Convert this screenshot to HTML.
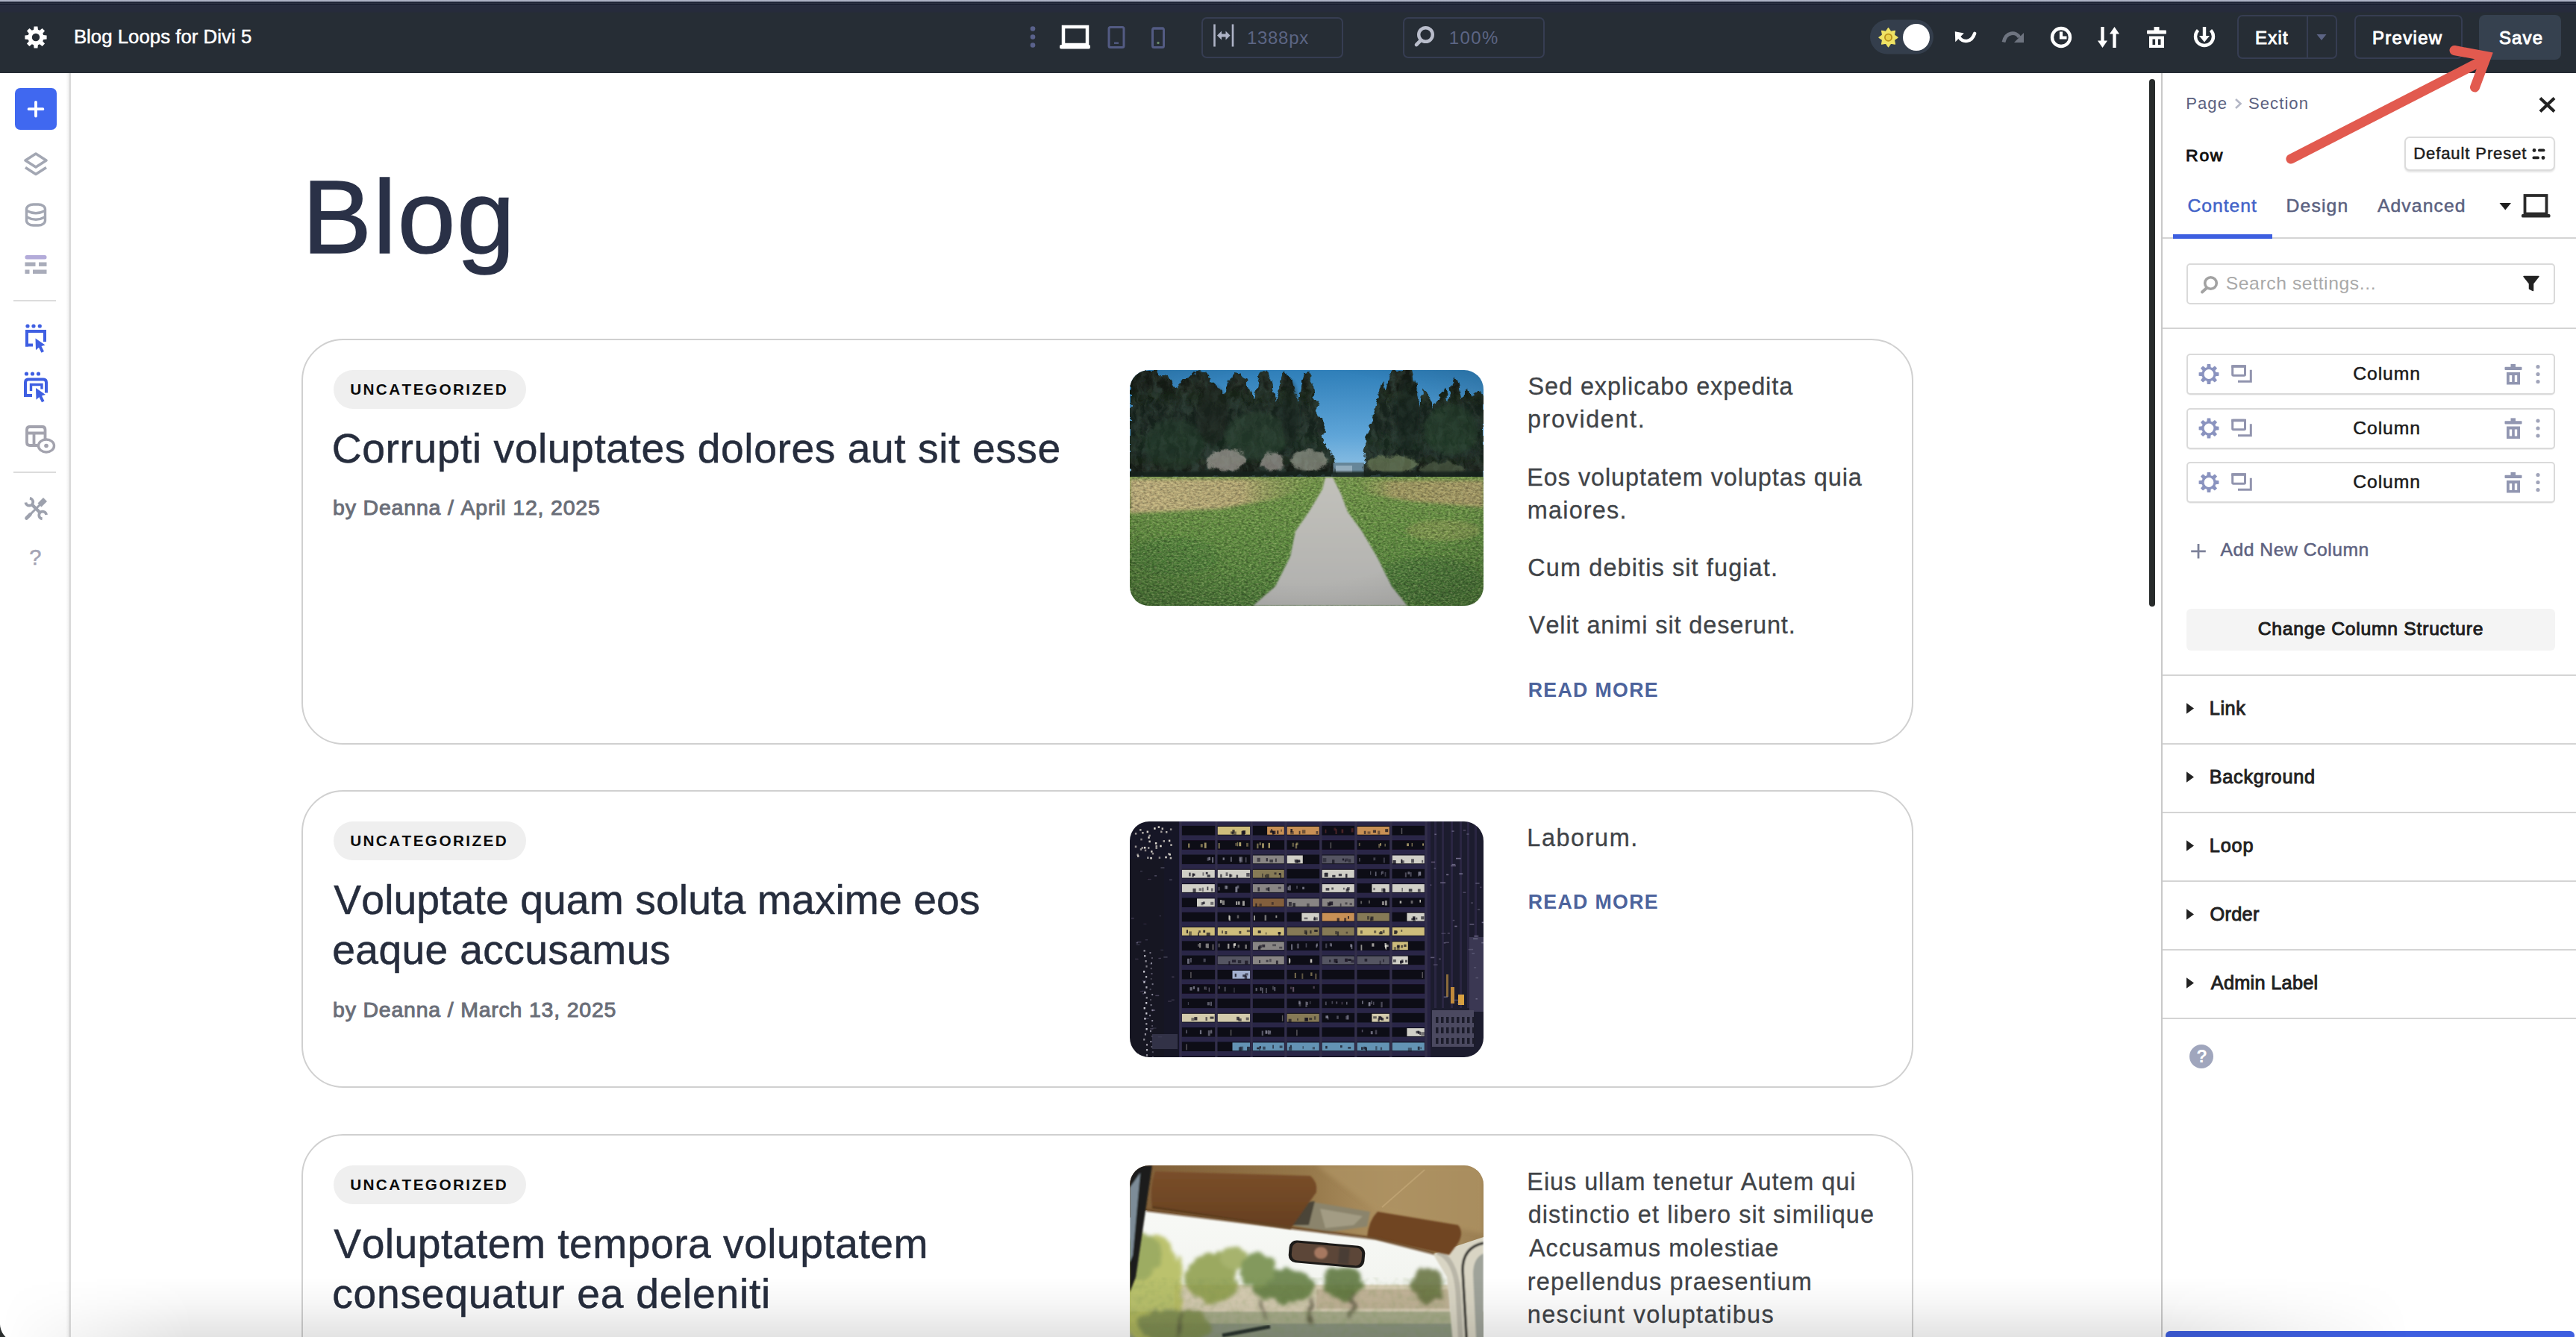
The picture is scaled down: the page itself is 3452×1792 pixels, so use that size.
<!DOCTYPE html><html lang="en"><head><meta charset="utf-8"><title>Blog Loops for Divi 5</title><style>
*{box-sizing:border-box;margin:0;padding:0}
html,body{width:3452px;height:1792px;overflow:hidden;background:#fff}
body{font-family:"Liberation Sans",sans-serif;font-kerning:none;position:relative;-webkit-font-smoothing:antialiased}
.t{position:absolute;line-height:1;white-space:nowrap}
.a{position:absolute}
.m{-webkit-text-stroke:0.5px currentColor}
.m2{-webkit-text-stroke:0.95px currentColor}
.box{position:absolute;border:2px solid #363d52;border-radius:7px}
svg{position:absolute;overflow:visible}
.col{position:absolute;left:2930px;width:494px;height:55px;border:2px solid #dadada;border-radius:5px;background:#fff;box-shadow:0 1px 0 rgba(0,0,0,.06)}
.hl{position:absolute;left:2898px;width:554px;height:2px;background:#d4d4d4}
.card{position:absolute;left:404px;width:2160px;border:2px solid #d0d0d0;border-radius:56px;background:#fff}
.pill{position:absolute;left:447px;width:258px;height:52px;border-radius:26px;background:#efefef}
</style></head><body>
<div class="a" id="canvas" style="left:95px;top:98px;width:2801px;height:1694px;background:#fff"></div>
<div class="t " style="left:405.05px;top:221.76px;font-size:139.53px;letter-spacing:1.822px;color:#2a3147;-webkit-text-stroke:1.5px #2a3147;">Blog</div>
<div class="card" style="top:454px;height:544px"></div>
<div class="pill" style="top:496px"></div>
<div class="t " style="left:469.15px;top:511.70px;font-size:20.78px;letter-spacing:2.369px;color:#0a0a0a;font-weight:700;">UNCATEGORIZED</div>
<div class="t " style="left:444.80px;top:573.73px;font-size:55.23px;letter-spacing:0.561px;color:#262d3d;-webkit-text-stroke:0.5px #262d3d;">Corrupti voluptates dolores aut sit esse</div>
<div class="t " style="left:446.06px;top:666.38px;font-size:28.49px;letter-spacing:0.820px;color:#6a6e78;-webkit-text-stroke:0.95px #6a6e78;">by Deanna / April 12, 2025</div>
<div class="t " style="left:2047.53px;top:501.56px;font-size:32.41px;letter-spacing:0.933px;color:#404347;-webkit-text-stroke:0.3px #404347;">Sed explicabo expedita</div>
<div class="t " style="left:2046.91px;top:546.26px;font-size:32.41px;letter-spacing:1.612px;color:#404347;-webkit-text-stroke:0.3px #404347;">provident.</div>
<div class="t " style="left:2046.34px;top:623.86px;font-size:32.41px;letter-spacing:0.931px;color:#404347;-webkit-text-stroke:0.3px #404347;">Eos voluptatem voluptas quia</div>
<div class="t " style="left:2046.85px;top:667.56px;font-size:32.41px;letter-spacing:1.189px;color:#404347;-webkit-text-stroke:0.3px #404347;">maiores.</div>
<div class="t " style="left:2047.35px;top:745.26px;font-size:32.41px;letter-spacing:1.125px;color:#404347;-webkit-text-stroke:0.3px #404347;">Cum debitis sit fugiat.</div>
<div class="t " style="left:2048.86px;top:821.76px;font-size:32.41px;letter-spacing:0.913px;color:#404347;-webkit-text-stroke:0.3px #404347;">Velit animi sit deserunt.</div>
<div class="t " style="left:2047.71px;top:911.76px;font-size:26.74px;letter-spacing:1.324px;color:#4c639c;font-weight:700;">READ MORE</div>
<div class="card" style="top:1059px;height:399px"></div>
<div class="pill" style="top:1101px"></div>
<div class="t " style="left:469.15px;top:1116.70px;font-size:20.78px;letter-spacing:2.369px;color:#0a0a0a;font-weight:700;">UNCATEGORIZED</div>
<div class="t " style="left:447.36px;top:1178.53px;font-size:55.23px;letter-spacing:0.117px;color:#262d3d;-webkit-text-stroke:0.5px #262d3d;">Voluptate quam soluta maxime eos</div>
<div class="t " style="left:445.25px;top:1245.93px;font-size:55.23px;letter-spacing:0.354px;color:#262d3d;-webkit-text-stroke:0.5px #262d3d;">eaque accusamus</div>
<div class="t " style="left:446.06px;top:1338.88px;font-size:28.49px;letter-spacing:0.797px;color:#6a6e78;-webkit-text-stroke:0.95px #6a6e78;">by Deanna / March 13, 2025</div>
<div class="t " style="left:2046.34px;top:1106.56px;font-size:32.41px;letter-spacing:1.570px;color:#404347;-webkit-text-stroke:0.3px #404347;">Laborum.</div>
<div class="t " style="left:2047.71px;top:1196.36px;font-size:26.74px;letter-spacing:1.324px;color:#4c639c;font-weight:700;">READ MORE</div>
<div class="card" style="top:1520px;height:400px"></div>
<div class="pill" style="top:1562px"></div>
<div class="t " style="left:469.15px;top:1577.70px;font-size:20.78px;letter-spacing:2.369px;color:#0a0a0a;font-weight:700;">UNCATEGORIZED</div>
<div class="t " style="left:447.36px;top:1639.73px;font-size:55.23px;letter-spacing:0.479px;color:#262d3d;-webkit-text-stroke:0.5px #262d3d;">Voluptatem tempora voluptatem</div>
<div class="t " style="left:445.25px;top:1707.13px;font-size:55.23px;letter-spacing:0.728px;color:#262d3d;-webkit-text-stroke:0.5px #262d3d;">consequatur ea deleniti</div>
<div class="t " style="left:2046.34px;top:1567.56px;font-size:32.41px;letter-spacing:0.955px;color:#404347;-webkit-text-stroke:0.3px #404347;">Eius ullam tenetur Autem qui</div>
<div class="t " style="left:2047.64px;top:1612.26px;font-size:32.41px;letter-spacing:1.105px;color:#404347;-webkit-text-stroke:0.3px #404347;">distinctio et libero sit similique</div>
<div class="t " style="left:2048.94px;top:1656.96px;font-size:32.41px;letter-spacing:1.070px;color:#404347;-webkit-text-stroke:0.3px #404347;">Accusamus molestiae</div>
<div class="t " style="left:2046.85px;top:1701.66px;font-size:32.41px;letter-spacing:1.179px;color:#404347;-webkit-text-stroke:0.3px #404347;">repellendus praesentium</div>
<div class="t " style="left:2046.85px;top:1746.36px;font-size:32.41px;letter-spacing:1.360px;color:#404347;-webkit-text-stroke:0.3px #404347;">nesciunt voluptatibus</div>
<svg id="ph1" style="left:1514px;top:496px" width="474" height="316" viewBox="0 0 474 316"><defs><clipPath id="cph1"><rect width="474" height="316" rx="26"/></clipPath>
<linearGradient id="p1sky" x1="0" y1="0" x2="0" y2="1"><stop offset="0" stop-color="#2f7fb9"/><stop offset=".55" stop-color="#5fa5d8"/><stop offset="1" stop-color="#a6cfea"/></linearGradient>
<linearGradient id="p1gr" x1="0" y1="0" x2="0" y2="1"><stop offset="0" stop-color="#74984a"/><stop offset=".45" stop-color="#5f8d40"/><stop offset="1" stop-color="#4b7a38"/></linearGradient>
<linearGradient id="p1tr" x1="0" y1="0" x2="0" y2="1"><stop offset="0" stop-color="#131d17"/><stop offset=".7" stop-color="#18261d"/><stop offset="1" stop-color="#111a14"/></linearGradient>
<linearGradient id="p1pa" x1="0" y1="0" x2="0" y2="1"><stop offset="0" stop-color="#c2c1bb"/><stop offset="1" stop-color="#b0b0ae"/></linearGradient>
<linearGradient id="p1dl" x1="0" y1="0" x2="1" y2="0"><stop offset="0" stop-color="#c6b482"/><stop offset=".6" stop-color="#b8aa76"/><stop offset="1" stop-color="#8f9a58" stop-opacity="0"/></linearGradient>
<linearGradient id="p1dr" x1="1" y1="0" x2="0" y2="0"><stop offset="0" stop-color="#a99d68"/><stop offset=".7" stop-color="#a29a62"/><stop offset="1" stop-color="#8f9a58" stop-opacity="0"/></linearGradient>
<radialGradient id="p1vg" cx=".5" cy=".45" r=".75"><stop offset=".6" stop-color="#000" stop-opacity="0"/><stop offset="1" stop-color="#000" stop-opacity=".16"/></radialGradient>
<filter id="p1n" x="0" y="0" width="100%" height="100%"><feTurbulence type="fractalNoise" baseFrequency=".22 .35" numOctaves="3" seed="7"/><feColorMatrix values="0 0 0 0 0  0 0 0 0 0  0 0 0 0 0  1.6 0 0 0 -.55"/></filter>
<filter id="p1n2" x="0" y="0" width="100%" height="100%"><feTurbulence type="fractalNoise" baseFrequency=".3 .5" numOctaves="2" seed="21"/><feColorMatrix values="0 0 0 0 .85  0 0 0 0 .9  0 0 0 0 .45  0 1.5 0 0 -.62"/></filter>
<filter id="p1d" x="-5%" y="-5%" width="110%" height="110%"><feTurbulence type="fractalNoise" baseFrequency=".09" numOctaves="3" seed="4"/><feDisplacementMap in="SourceGraphic" scale="11" xChannelSelector="R" yChannelSelector="G"/></filter>
<filter id="p1tn" x="0" y="0" width="100%" height="100%"><feTurbulence type="fractalNoise" baseFrequency=".12 .07" numOctaves="3" seed="11"/><feColorMatrix values="0 0 0 0 .30  0 0 0 0 .46  0 0 0 0 .30  0 2.2 0 0 -1.0"/><feComposite in2="SourceGraphic" operator="in"/></filter>
<filter id="p1td" x="0" y="0" width="100%" height="100%"><feTurbulence type="fractalNoise" baseFrequency=".1 .05" numOctaves="3" seed="31"/><feColorMatrix values="0 0 0 0 .03  0 0 0 0 .05  0 0 0 0 .04  2.4 0 0 0 -.9"/><feComposite in2="SourceGraphic" operator="in"/></filter>
<filter id="p1b"><feGaussianBlur stdDeviation="2.2"/></filter>
<filter id="p1b1"><feGaussianBlur stdDeviation="1"/></filter>
</defs><g clip-path="url(#cph1)"><rect width="474" height="160" fill="url(#p1sky)"/><g filter="url(#p1d)"><g fill="url(#p1tr)"><polygon points="0.0,0.0 37.8,0.0 41.4,7.1 50.8,8.3 61.4,24.8 70.9,13.0 80.3,9.5 89.8,0.0 104.0,1.9 111.1,16.5 127.6,31.9 134.7,11.8 141.8,4.7 147.7,3.5 156.0,14.2 165.4,37.8 176.0,5.9 181.9,0.0 189.0,14.2 196.1,43.7 205.6,4.7 209.1,1.9 217.4,11.8 224.5,47.3 233.9,3.5 238.7,1.9 245.7,18.9 248.1,37.8 254.7,47.3 250.5,54.3 258.0,68.5 262.8,82.7 256.4,87.9 265.1,104.0 271.7,115.8 276.9,124.1 276.0,141.8 0.0,144.6"/><polygon points="474.0,144.6 311.4,141.8 312.4,132.3 314.7,113.4 319.5,94.5 316.6,87.9 323.7,70.9 327.5,52.0 331.3,37.8 335.5,26.0 339.3,17.0 342.6,26.5 347.4,14.2 352.1,0.0 378.1,0.0 380.4,14.2 384.2,30.7 388.0,50.8 394.6,23.6 399.3,31.2 406.9,50.8 415.9,33.1 423.0,25.5 428.2,44.9 432.4,14.2 436.2,9.0 440.0,19.4 444.7,40.2 451.3,26.0 458.4,33.6 466.7,30.7 474.0,35.4"/></g></g><g filter="url(#p1d)"><g filter="url(#p1tn)" opacity=".2"><polygon points="0.0,0.0 37.8,0.0 41.4,7.1 50.8,8.3 61.4,24.8 70.9,13.0 80.3,9.5 89.8,0.0 104.0,1.9 111.1,16.5 127.6,31.9 134.7,11.8 141.8,4.7 147.7,3.5 156.0,14.2 165.4,37.8 176.0,5.9 181.9,0.0 189.0,14.2 196.1,43.7 205.6,4.7 209.1,1.9 217.4,11.8 224.5,47.3 233.9,3.5 238.7,1.9 245.7,18.9 248.1,37.8 254.7,47.3 250.5,54.3 258.0,68.5 262.8,82.7 256.4,87.9 265.1,104.0 271.7,115.8 276.9,124.1 276.0,141.8 0.0,144.6"/><polygon points="474.0,144.6 311.4,141.8 312.4,132.3 314.7,113.4 319.5,94.5 316.6,87.9 323.7,70.9 327.5,52.0 331.3,37.8 335.5,26.0 339.3,17.0 342.6,26.5 347.4,14.2 352.1,0.0 378.1,0.0 380.4,14.2 384.2,30.7 388.0,50.8 394.6,23.6 399.3,31.2 406.9,50.8 415.9,33.1 423.0,25.5 428.2,44.9 432.4,14.2 436.2,9.0 440.0,19.4 444.7,40.2 451.3,26.0 458.4,33.6 466.7,30.7 474.0,35.4"/></g></g><g filter="url(#p1d)"><g filter="url(#p1td)" opacity=".9"><polygon points="0.0,0.0 37.8,0.0 41.4,7.1 50.8,8.3 61.4,24.8 70.9,13.0 80.3,9.5 89.8,0.0 104.0,1.9 111.1,16.5 127.6,31.9 134.7,11.8 141.8,4.7 147.7,3.5 156.0,14.2 165.4,37.8 176.0,5.9 181.9,0.0 189.0,14.2 196.1,43.7 205.6,4.7 209.1,1.9 217.4,11.8 224.5,47.3 233.9,3.5 238.7,1.9 245.7,18.9 248.1,37.8 254.7,47.3 250.5,54.3 258.0,68.5 262.8,82.7 256.4,87.9 265.1,104.0 271.7,115.8 276.9,124.1 276.0,141.8 0.0,144.6"/><polygon points="474.0,144.6 311.4,141.8 312.4,132.3 314.7,113.4 319.5,94.5 316.6,87.9 323.7,70.9 327.5,52.0 331.3,37.8 335.5,26.0 339.3,17.0 342.6,26.5 347.4,14.2 352.1,0.0 378.1,0.0 380.4,14.2 384.2,30.7 388.0,50.8 394.6,23.6 399.3,31.2 406.9,50.8 415.9,33.1 423.0,25.5 428.2,44.9 432.4,14.2 436.2,9.0 440.0,19.4 444.7,40.2 451.3,26.0 458.4,33.6 466.7,30.7 474.0,35.4"/></g></g><rect x="272" y="124" width="42" height="20" fill="#5c7480" opacity=".75"/><rect x="276" y="128" width="22" height="10" fill="#9fb6c6" opacity=".8"/><g filter="url(#p1b)" opacity=".45"><ellipse cx="170" cy="88" rx="42" ry="32" fill="#2e4a34"/><ellipse cx="60" cy="100" rx="40" ry="34" fill="#27402e"/><ellipse cx="430" cy="80" rx="36" ry="34" fill="#2c4830"/><ellipse cx="372" cy="60" rx="16" ry="50" fill="#16201a"/><ellipse cx="110" cy="60" rx="22" ry="40" fill="#1a241e"/><ellipse cx="215" cy="60" rx="12" ry="46" fill="#17221b"/></g><g filter="url(#p1d)" opacity=".58"><g filter="url(#p1b1)"><ellipse cx="130" cy="121" rx="27" ry="14" fill="#c3bbb4"/><ellipse cx="192" cy="123" rx="16" ry="12" fill="#b9b0ac"/><ellipse cx="240" cy="121" rx="25" ry="14" fill="#aeb0a2"/><ellipse cx="350" cy="126" rx="34" ry="12" fill="#7f9068"/><ellipse cx="418" cy="132" rx="30" ry="8" fill="#5a6a50"/></g></g><rect x="0" y="136" width="474" height="12" fill="#16221a" filter="url(#p1b1)" opacity=".85"/><rect x="0" y="143" width="474" height="173" fill="url(#p1gr)"/><g filter="url(#p1b)"><polygon points="0,146 250,146 236,158 200,172 120,186 0,192" fill="url(#p1dl)"/><polygon points="474,148 300,148 320,166 380,176 474,184" fill="url(#p1dr)"/><ellipse cx="420" cy="215" rx="50" ry="14" fill="#8f9a58" opacity=".55"/><ellipse cx="60" cy="250" rx="60" ry="26" fill="#47783a" opacity=".4"/><ellipse cx="400" cy="280" rx="70" ry="30" fill="#3e6e34" opacity=".45"/></g><rect x="0" y="143" width="474" height="173" filter="url(#p1n)" opacity=".42"/><rect x="0" y="143" width="474" height="173" filter="url(#p1n2)" opacity=".5"/><polygon points="262,144 272,144 283,166 292,190 311,216 331,250 351,290 372,316 165,316 195,290 215,250 222,216 240,190 258,160" fill="url(#p1pa)" filter="url(#p1b1)"/><rect width="474" height="316" fill="url(#p1vg)"/></g></svg>
<svg id="ph2" style="left:1514px;top:1101px" width="474" height="316" viewBox="0 0 474 316"><defs><clipPath id="cph2"><rect width="474" height="316" rx="26"/></clipPath><filter id="p2b"><feGaussianBlur stdDeviation=".5"/></filter></defs><g clip-path="url(#cph2)"><g filter="url(#p2b)"><rect width="474" height="316" fill="#15131f"/><rect x="399" y="0" width="75" height="316" fill="#1d1a2e"/><rect x="408" y="0" width="3" height="250" fill="#2a2642"/><rect x="418" y="0" width="3" height="250" fill="#2a2642"/><rect x="430" y="0" width="3" height="250" fill="#2a2642"/><rect x="442" y="0" width="3" height="250" fill="#2a2642"/><rect x="452" y="0" width="3" height="250" fill="#2a2642"/><rect x="462" y="0" width="3" height="250" fill="#2a2642"/><rect x="455" y="155" width="19" height="100" fill="#3a3852"/><rect x="405" y="253" width="56" height="49" fill="#4b4961"/><rect x="410" y="262" width="3.5" height="8" fill="#1c1a2a"/><rect x="417" y="262" width="3.5" height="8" fill="#1c1a2a"/><rect x="424" y="262" width="3.5" height="8" fill="#1c1a2a"/><rect x="431" y="262" width="3.5" height="8" fill="#1c1a2a"/><rect x="438" y="262" width="3.5" height="8" fill="#1c1a2a"/><rect x="445" y="262" width="3.5" height="8" fill="#1c1a2a"/><rect x="452" y="262" width="3.5" height="8" fill="#1c1a2a"/><rect x="459" y="262" width="3.5" height="8" fill="#1c1a2a"/><rect x="410" y="276" width="3.5" height="8" fill="#1c1a2a"/><rect x="417" y="276" width="3.5" height="8" fill="#1c1a2a"/><rect x="424" y="276" width="3.5" height="8" fill="#1c1a2a"/><rect x="431" y="276" width="3.5" height="8" fill="#1c1a2a"/><rect x="438" y="276" width="3.5" height="8" fill="#1c1a2a"/><rect x="445" y="276" width="3.5" height="8" fill="#1c1a2a"/><rect x="452" y="276" width="3.5" height="8" fill="#1c1a2a"/><rect x="459" y="276" width="3.5" height="8" fill="#1c1a2a"/><rect x="410" y="290" width="3.5" height="8" fill="#1c1a2a"/><rect x="417" y="290" width="3.5" height="8" fill="#1c1a2a"/><rect x="424" y="290" width="3.5" height="8" fill="#1c1a2a"/><rect x="431" y="290" width="3.5" height="8" fill="#1c1a2a"/><rect x="438" y="290" width="3.5" height="8" fill="#1c1a2a"/><rect x="445" y="290" width="3.5" height="8" fill="#1c1a2a"/><rect x="452" y="290" width="3.5" height="8" fill="#1c1a2a"/><rect x="459" y="290" width="3.5" height="8" fill="#1c1a2a"/><rect x="430" y="222" width="5" height="22" fill="#c08a3a"/><rect x="440" y="232" width="8" height="14" fill="#d8a040"/><rect x="424" y="205" width="3" height="30" fill="#8a6a3a"/><rect x="446.8" y="11.1" width="3.4" height="1.6" fill="#8c88a8" opacity="0.41"/><rect x="453.6" y="170.8" width="6.5" height="1.6" fill="#8c88a8" opacity="0.34"/><rect x="431.5" y="12.3" width="3.1" height="1.6" fill="#8c88a8" opacity="0.55"/><rect x="403.9" y="53.7" width="5.2" height="1.6" fill="#8c88a8" opacity="0.57"/><rect x="417.4" y="149.4" width="6.0" height="1.6" fill="#8c88a8" opacity="0.30"/><rect x="458.4" y="176.0" width="3.7" height="1.6" fill="#8c88a8" opacity="0.38"/><rect x="469.0" y="87.5" width="2.5" height="1.6" fill="#8c88a8" opacity="0.35"/><rect x="461.3" y="152.9" width="6.0" height="1.6" fill="#8c88a8" opacity="0.66"/><rect x="439.5" y="243.4" width="3.9" height="1.6" fill="#8c88a8" opacity="0.58"/><rect x="460.1" y="156.5" width="6.3" height="1.6" fill="#8c88a8" opacity="0.59"/><rect x="451.3" y="16.2" width="3.1" height="1.6" fill="#8c88a8" opacity="0.44"/><rect x="407.6" y="62.0" width="2.5" height="1.6" fill="#8c88a8" opacity="0.44"/><rect x="446.5" y="94.4" width="3.9" height="1.6" fill="#8c88a8" opacity="0.40"/><rect x="420.7" y="234.5" width="5.2" height="1.6" fill="#8c88a8" opacity="0.60"/><rect x="414.0" y="183.6" width="2.8" height="1.6" fill="#8c88a8" opacity="0.49"/><rect x="471.3" y="161.8" width="4.8" height="1.6" fill="#8c88a8" opacity="0.64"/><rect x="461.0" y="195.1" width="3.1" height="1.6" fill="#8c88a8" opacity="0.32"/><rect x="424.1" y="70.6" width="3.1" height="1.6" fill="#8c88a8" opacity="0.77"/><rect x="463.3" y="82.1" width="5.3" height="1.6" fill="#8c88a8" opacity="0.50"/><rect x="466.0" y="117.4" width="3.3" height="1.6" fill="#8c88a8" opacity="0.42"/><rect x="441.3" y="69.4" width="4.9" height="1.6" fill="#8c88a8" opacity="0.75"/><rect x="430.0" y="58.7" width="7.0" height="1.6" fill="#8c88a8" opacity="0.55"/><rect x="408.4" y="16.5" width="2.5" height="1.6" fill="#8c88a8" opacity="0.61"/><rect x="457.4" y="108.4" width="2.3" height="1.6" fill="#8c88a8" opacity="0.49"/><rect x="471.7" y="134.6" width="6.9" height="1.6" fill="#8c88a8" opacity="0.73"/><rect x="402.8" y="181.6" width="5.4" height="1.6" fill="#8c88a8" opacity="0.57"/><rect x="420.7" y="162.0" width="2.6" height="1.6" fill="#8c88a8" opacity="0.52"/><rect x="433.8" y="238.7" width="6.4" height="1.6" fill="#8c88a8" opacity="0.43"/><rect x="437.0" y="48.8" width="6.6" height="1.6" fill="#8c88a8" opacity="0.74"/><rect x="422.9" y="161.5" width="5.0" height="1.6" fill="#8c88a8" opacity="0.38"/><rect x="455.4" y="137.1" width="5.9" height="1.6" fill="#8c88a8" opacity="0.57"/><rect x="402.0" y="84.4" width="2.1" height="1.6" fill="#8c88a8" opacity="0.76"/><rect x="463.5" y="208.8" width="3.5" height="1.6" fill="#8c88a8" opacity="0.33"/><rect x="463.5" y="237.0" width="2.4" height="1.6" fill="#8c88a8" opacity="0.54"/><rect x="406.8" y="191.3" width="5.8" height="1.6" fill="#8c88a8" opacity="0.36"/><rect x="435.3" y="139.7" width="3.3" height="1.6" fill="#8c88a8" opacity="0.74"/><rect x="431.6" y="56.9" width="4.7" height="1.6" fill="#8c88a8" opacity="0.66"/><rect x="416.1" y="81.4" width="7.0" height="1.6" fill="#8c88a8" opacity="0.62"/><rect x="432.7" y="131.8" width="2.6" height="1.6" fill="#8c88a8" opacity="0.41"/><rect x="425.7" y="149.1" width="3.2" height="1.6" fill="#8c88a8" opacity="0.41"/><rect x="0" y="0" width="67" height="316" fill="#191727"/><rect x="0" y="50" width="46" height="266" fill="#141220"/><rect x="6.8" y="32.5" width="2.4" height="2.6" fill="#e8e4d8" opacity="0.61"/><rect x="51.0" y="42.1" width="2.4" height="2.6" fill="#e8e4d8" opacity="0.54"/><rect x="15.6" y="34.1" width="2.4" height="2.6" fill="#e8e4d8" opacity="0.61"/><rect x="10.0" y="45.3" width="2.4" height="2.6" fill="#e8e4d8" opacity="0.79"/><rect x="28.1" y="39.0" width="2.4" height="2.6" fill="#e8e4d8" opacity="0.90"/><rect x="13.1" y="10.1" width="2.4" height="2.6" fill="#e8e4d8" opacity="0.72"/><rect x="25.4" y="25.6" width="2.4" height="2.6" fill="#e8e4d8" opacity="0.86"/><rect x="38.7" y="47.3" width="2.4" height="2.6" fill="#e8e4d8" opacity="0.55"/><rect x="24.3" y="20.3" width="2.4" height="2.6" fill="#e8e4d8" opacity="0.93"/><rect x="16.2" y="14.0" width="2.4" height="2.6" fill="#e8e4d8" opacity="0.72"/><rect x="25.4" y="17.7" width="2.4" height="2.6" fill="#e8e4d8" opacity="0.62"/><rect x="51.9" y="24.6" width="2.4" height="2.6" fill="#e8e4d8" opacity="0.93"/><rect x="32.2" y="8.1" width="2.4" height="2.6" fill="#e8e4d8" opacity="1.00"/><rect x="47.3" y="46.7" width="2.4" height="2.6" fill="#e8e4d8" opacity="0.96"/><rect x="48.0" y="13.0" width="2.4" height="2.6" fill="#e8e4d8" opacity="0.74"/><rect x="14.3" y="22.8" width="2.4" height="2.6" fill="#e8e4d8" opacity="0.53"/><rect x="23.1" y="47.4" width="2.4" height="2.6" fill="#e8e4d8" opacity="0.63"/><rect x="44.6" y="25.1" width="2.4" height="2.6" fill="#e8e4d8" opacity="0.71"/><rect x="53.7" y="47.8" width="2.4" height="2.6" fill="#e8e4d8" opacity="0.78"/><rect x="41.1" y="12.5" width="2.4" height="2.6" fill="#e8e4d8" opacity="0.65"/><rect x="54.3" y="30.3" width="2.4" height="2.6" fill="#e8e4d8" opacity="0.77"/><rect x="42.6" y="8.4" width="2.4" height="2.6" fill="#e8e4d8" opacity="0.79"/><rect x="29.7" y="41.8" width="2.4" height="2.6" fill="#e8e4d8" opacity="0.58"/><rect x="53.9" y="9.4" width="2.4" height="2.6" fill="#e8e4d8" opacity="0.59"/><rect x="34.5" y="34.4" width="2.4" height="2.6" fill="#e8e4d8" opacity="0.62"/><rect x="9.4" y="43.4" width="2.4" height="2.6" fill="#e8e4d8" opacity="0.62"/><rect x="34.5" y="32.0" width="2.4" height="2.6" fill="#e8e4d8" opacity="0.71"/><rect x="33.9" y="28.0" width="2.4" height="2.6" fill="#e8e4d8" opacity="0.97"/><rect x="13.8" y="36.1" width="2.4" height="2.6" fill="#e8e4d8" opacity="0.62"/><rect x="24.0" y="34.2" width="2.4" height="2.6" fill="#e8e4d8" opacity="0.65"/><rect x="19.8" y="37.6" width="2.4" height="2.6" fill="#e8e4d8" opacity="0.54"/><rect x="27.3" y="47.9" width="2.4" height="2.6" fill="#e8e4d8" opacity="1.00"/><rect x="6.9" y="15.0" width="2.4" height="2.6" fill="#e8e4d8" opacity="0.63"/><rect x="52.5" y="43.0" width="2.4" height="2.6" fill="#e8e4d8" opacity="0.94"/><rect x="22.6" y="12.6" width="2.4" height="2.6" fill="#e8e4d8" opacity="0.92"/><rect x="40.3" y="31.7" width="2.4" height="2.6" fill="#e8e4d8" opacity="0.99"/><rect x="37.7" y="6.3" width="2.4" height="2.6" fill="#e8e4d8" opacity="0.91"/><rect x="18.9" y="33.9" width="2.4" height="2.6" fill="#e8e4d8" opacity="0.97"/><rect x="18.5" y="172" width="2.2" height="2.6" fill="#d8d8e0" opacity="0.56"/><rect x="26.4" y="175" width="2" height="2.2" fill="#b8b8c8" opacity="0.58"/><rect x="19.1" y="179" width="2.2" height="2.6" fill="#d8d8e0" opacity="0.80"/><rect x="28.9" y="182" width="2" height="2.2" fill="#b8b8c8" opacity="0.40"/><rect x="20.5" y="186" width="2.2" height="2.6" fill="#d8d8e0" opacity="0.63"/><rect x="28.0" y="189" width="2" height="2.2" fill="#b8b8c8" opacity="0.75"/><rect x="21.4" y="193" width="2.2" height="2.6" fill="#d8d8e0" opacity="0.55"/><rect x="27.7" y="196" width="2" height="2.2" fill="#b8b8c8" opacity="0.44"/><rect x="18.0" y="200" width="2.2" height="2.6" fill="#d8d8e0" opacity="0.89"/><rect x="28.5" y="203" width="2" height="2.2" fill="#b8b8c8" opacity="0.43"/><rect x="21.0" y="207" width="2.2" height="2.6" fill="#d8d8e0" opacity="0.78"/><rect x="27.7" y="210" width="2" height="2.2" fill="#b8b8c8" opacity="0.30"/><rect x="18.3" y="214" width="2.2" height="2.6" fill="#d8d8e0" opacity="0.94"/><rect x="29.6" y="217" width="2" height="2.2" fill="#b8b8c8" opacity="0.57"/><rect x="21.3" y="221" width="2.2" height="2.6" fill="#d8d8e0" opacity="0.79"/><rect x="26.6" y="224" width="2" height="2.2" fill="#b8b8c8" opacity="0.36"/><rect x="19.2" y="228" width="2.2" height="2.6" fill="#d8d8e0" opacity="0.95"/><rect x="29.2" y="231" width="2" height="2.2" fill="#b8b8c8" opacity="0.73"/><rect x="21.6" y="235" width="2.2" height="2.6" fill="#d8d8e0" opacity="0.61"/><rect x="27.0" y="238" width="2" height="2.2" fill="#b8b8c8" opacity="0.35"/><rect x="21.1" y="242" width="2.2" height="2.6" fill="#d8d8e0" opacity="0.94"/><rect x="27.6" y="245" width="2" height="2.2" fill="#b8b8c8" opacity="0.61"/><rect x="18.6" y="249" width="2.2" height="2.6" fill="#d8d8e0" opacity="0.96"/><rect x="29.5" y="252" width="2" height="2.2" fill="#b8b8c8" opacity="0.79"/><rect x="21.2" y="256" width="2.2" height="2.6" fill="#d8d8e0" opacity="0.94"/><rect x="26.1" y="259" width="2" height="2.2" fill="#b8b8c8" opacity="0.67"/><rect x="19.3" y="263" width="2.2" height="2.6" fill="#d8d8e0" opacity="0.97"/><rect x="29.2" y="266" width="2" height="2.2" fill="#b8b8c8" opacity="0.73"/><rect x="21.2" y="270" width="2.2" height="2.6" fill="#d8d8e0" opacity="0.63"/><rect x="29.1" y="273" width="2" height="2.2" fill="#b8b8c8" opacity="0.35"/><rect x="21.5" y="277" width="2.2" height="2.6" fill="#d8d8e0" opacity="0.93"/><rect x="26.9" y="280" width="2" height="2.2" fill="#b8b8c8" opacity="0.71"/><rect x="19.8" y="284" width="2.2" height="2.6" fill="#d8d8e0" opacity="0.65"/><rect x="29.2" y="287" width="2" height="2.2" fill="#b8b8c8" opacity="0.41"/><rect x="18.1" y="291" width="2.2" height="2.6" fill="#d8d8e0" opacity="0.60"/><rect x="27.3" y="294" width="2" height="2.2" fill="#b8b8c8" opacity="0.73"/><rect x="21.9" y="298" width="2.2" height="2.6" fill="#d8d8e0" opacity="0.64"/><rect x="28.6" y="301" width="2" height="2.2" fill="#b8b8c8" opacity="0.50"/><rect x="21.9" y="305" width="2.2" height="2.6" fill="#d8d8e0" opacity="0.77"/><rect x="29.8" y="308" width="2" height="2.2" fill="#b8b8c8" opacity="0.36"/><rect x="21.9" y="312" width="2.2" height="2.6" fill="#d8d8e0" opacity="0.59"/><rect x="29.9" y="315" width="2" height="2.2" fill="#b8b8c8" opacity="0.43"/><rect x="8.5" y="164.3" width="4.9" height="1.5" fill="#7f7c98" opacity="0.33"/><rect x="38.4" y="182.7" width="3.5" height="1.5" fill="#7f7c98" opacity="0.43"/><rect x="17.3" y="230.1" width="2.0" height="1.5" fill="#7f7c98" opacity="0.57"/><rect x="34.3" y="232.7" width="5.0" height="1.5" fill="#7f7c98" opacity="0.47"/><rect x="23.9" y="76.8" width="4.7" height="1.5" fill="#7f7c98" opacity="0.33"/><rect x="20.8" y="263.5" width="4.9" height="1.5" fill="#7f7c98" opacity="0.32"/><rect x="20.6" y="158.0" width="3.6" height="1.5" fill="#7f7c98" opacity="0.32"/><rect x="9.6" y="160.9" width="5.8" height="1.5" fill="#7f7c98" opacity="0.47"/><rect x="56.2" y="207.7" width="3.2" height="1.5" fill="#7f7c98" opacity="0.42"/><rect x="2.0" y="128.9" width="3.7" height="1.5" fill="#7f7c98" opacity="0.43"/><rect x="41.3" y="171.6" width="3.8" height="1.5" fill="#7f7c98" opacity="0.29"/><rect x="30.4" y="276.3" width="5.2" height="1.5" fill="#7f7c98" opacity="0.27"/><rect x="7.1" y="183.7" width="4.5" height="1.5" fill="#7f7c98" opacity="0.33"/><rect x="51.1" y="240.3" width="4.7" height="1.5" fill="#7f7c98" opacity="0.29"/><rect x="13.9" y="65.9" width="3.0" height="1.5" fill="#7f7c98" opacity="0.39"/><rect x="53.0" y="77.5" width="3.7" height="1.5" fill="#7f7c98" opacity="0.45"/><rect x="13.7" y="227.1" width="4.0" height="1.5" fill="#7f7c98" opacity="0.30"/><rect x="41.4" y="61.3" width="5.0" height="1.5" fill="#7f7c98" opacity="0.51"/><rect x="8.4" y="162.0" width="2.7" height="1.5" fill="#7f7c98" opacity="0.58"/><rect x="33.1" y="72.1" width="3.0" height="1.5" fill="#7f7c98" opacity="0.54"/><rect x="29.4" y="252.3" width="4.7" height="1.5" fill="#7f7c98" opacity="0.60"/><rect x="37.7" y="288.0" width="5.6" height="1.5" fill="#7f7c98" opacity="0.45"/><rect x="45.2" y="181.1" width="5.3" height="1.5" fill="#7f7c98" opacity="0.42"/><rect x="55.8" y="238.5" width="3.9" height="1.5" fill="#7f7c98" opacity="0.30"/><rect x="16.8" y="213.0" width="5.1" height="1.5" fill="#7f7c98" opacity="0.41"/><rect x="39.6" y="125.9" width="2.3" height="1.5" fill="#7f7c98" opacity="0.31"/><rect x="18.3" y="136.7" width="4.2" height="1.5" fill="#7f7c98" opacity="0.26"/><rect x="15.9" y="226.5" width="4.8" height="1.5" fill="#7f7c98" opacity="0.23"/><rect x="26.5" y="190.2" width="3.7" height="1.5" fill="#7f7c98" opacity="0.28"/><rect x="27.2" y="277.2" width="4.3" height="1.5" fill="#7f7c98" opacity="0.48"/><rect x="30" y="285" width="34" height="20" fill="#3a3850" opacity=".8"/><rect x="66" y="0" width="334" height="316" fill="#2c2846"/><rect x="69.5" y="5.9" width="44.7" height="12.6" fill="#0e0d18"/><rect x="117.2" y="5.9" width="44.3" height="12.6" fill="#0e0d18"/><rect x="117.6" y="6.9" width="43.5" height="10.8" fill="#e9d68a" opacity="0.88"/><rect x="136.9" y="13.7" width="2.5" height="3.7" fill="#15131f" opacity="0.81"/><rect x="151.0" y="12.1" width="4.1" height="4.9" fill="#15131f" opacity="0.81"/><rect x="137.4" y="11.0" width="3.2" height="3.7" fill="#15131f" opacity="0.72"/><rect x="149.6" y="12.8" width="4.4" height="5.3" fill="#15131f" opacity="0.84"/><rect x="139.2" y="13.5" width="3.6" height="4.5" fill="#15131f" opacity="0.48"/><rect x="135.0" y="13.4" width="2.1" height="3.3" fill="#15131f" opacity="0.58"/><rect x="164.5" y="5.9" width="42.7" height="12.6" fill="#0e0d18"/><rect x="184.1" y="6.9" width="22.7" height="10.8" fill="#e2a35c" opacity="0.88"/><rect x="190.8" y="12.9" width="2.8" height="4.8" fill="#15131f" opacity="0.78"/><rect x="189.4" y="10.2" width="1.6" height="4.1" fill="#15131f" opacity="0.85"/><rect x="191.2" y="12.5" width="4.2" height="4.5" fill="#15131f" opacity="0.75"/><rect x="202.3" y="10.7" width="1.6" height="3.0" fill="#15131f" opacity="0.50"/><rect x="197.1" y="12.2" width="2.3" height="4.6" fill="#15131f" opacity="0.76"/><rect x="187.8" y="12.3" width="4.1" height="2.8" fill="#15131f" opacity="0.78"/><rect x="210.2" y="5.9" width="44.0" height="12.6" fill="#0e0d18"/><rect x="210.6" y="6.9" width="43.2" height="10.8" fill="#e2a35c" opacity="0.88"/><rect x="215.4" y="10.0" width="2.6" height="4.5" fill="#15131f" opacity="0.83"/><rect x="226.7" y="12.8" width="1.8" height="4.6" fill="#15131f" opacity="0.70"/><rect x="215.2" y="13.0" width="4.5" height="4.3" fill="#15131f" opacity="0.50"/><rect x="249.6" y="13.0" width="2.7" height="3.8" fill="#15131f" opacity="0.60"/><rect x="230.9" y="11.3" width="4.5" height="5.0" fill="#15131f" opacity="0.49"/><rect x="257.2" y="5.9" width="44.0" height="12.6" fill="#0e0d18"/><rect x="283.6" y="10.5" width="2.6" height="5.0" fill="#6a3030" opacity="0.68"/><rect x="296.8" y="9.1" width="2.8" height="5.4" fill="#6a3030" opacity="0.57"/><rect x="275.6" y="10.2" width="1.7" height="6.8" fill="#6a3030" opacity="0.72"/><rect x="261.7" y="10.6" width="1.7" height="5.1" fill="#6a3030" opacity="0.62"/><rect x="273.4" y="8.5" width="2.9" height="3.8" fill="#6a3030" opacity="0.45"/><rect x="304.2" y="5.9" width="44.0" height="12.6" fill="#0e0d18"/><rect x="304.6" y="6.9" width="43.2" height="10.8" fill="#e2a35c" opacity="0.88"/><rect x="318.5" y="13.4" width="4.0" height="3.3" fill="#15131f" opacity="0.45"/><rect x="342.2" y="10.2" width="4.0" height="4.0" fill="#15131f" opacity="0.75"/><rect x="332.1" y="12.5" width="3.2" height="4.9" fill="#15131f" opacity="0.49"/><rect x="313.8" y="12.7" width="2.6" height="4.2" fill="#15131f" opacity="0.64"/><rect x="325.9" y="11.6" width="4.1" height="3.5" fill="#15131f" opacity="0.73"/><rect x="351.2" y="5.9" width="44.0" height="12.6" fill="#0e0d18"/><rect x="363.8" y="8.9" width="1.4" height="8" fill="#eceadf" opacity=".35"/><rect x="69.5" y="25.2" width="44.7" height="12.6" fill="#0e0d18"/><rect x="99.9" y="28.5" width="2.7" height="7.3" fill="#e9d68a" opacity="0.66"/><rect x="78.3" y="29.5" width="1.8" height="5.7" fill="#e9d68a" opacity="0.69"/><rect x="94.8" y="30.2" width="2.9" height="4.3" fill="#e9d68a" opacity="0.51"/><rect x="117.2" y="25.2" width="44.3" height="12.6" fill="#0e0d18"/><rect x="118.8" y="29.0" width="1.7" height="7.4" fill="#e9d68a" opacity="0.60"/><rect x="146.3" y="28.0" width="2.9" height="5.2" fill="#e9d68a" opacity="0.74"/><rect x="141.3" y="28.9" width="2.1" height="3.8" fill="#e9d68a" opacity="0.37"/><rect x="156.1" y="28.9" width="2.8" height="4.8" fill="#e9d68a" opacity="0.38"/><rect x="143.6" y="27.8" width="1.5" height="5.5" fill="#e9d68a" opacity="0.49"/><rect x="164.5" y="25.2" width="42.7" height="12.6" fill="#0e0d18"/><rect x="170.1" y="29.6" width="2.4" height="6.6" fill="#e9d68a" opacity="0.45"/><rect x="185.7" y="28.8" width="2.1" height="6.9" fill="#e9d68a" opacity="0.80"/><rect x="177.3" y="29.3" width="2.4" height="6.3" fill="#e9d68a" opacity="0.78"/><rect x="173.5" y="28.2" width="2.5" height="3.7" fill="#e9d68a" opacity="0.43"/><rect x="210.2" y="25.2" width="44.0" height="12.6" fill="#0e0d18"/><rect x="217.5" y="28.7" width="2.6" height="5.1" fill="#e9d68a" opacity="0.36"/><rect x="222.7" y="28.4" width="2.9" height="3.3" fill="#e9d68a" opacity="0.46"/><rect x="221.8" y="29.7" width="2.4" height="6.6" fill="#e9d68a" opacity="0.44"/><rect x="257.2" y="25.2" width="44.0" height="12.6" fill="#0e0d18"/><rect x="268.7" y="28.2" width="1.4" height="8" fill="#eceadf" opacity=".35"/><rect x="304.2" y="25.2" width="44.0" height="12.6" fill="#0e0d18"/><rect x="341.5" y="29.8" width="1.3" height="3.7" fill="#e9d68a" opacity="0.49"/><rect x="335.2" y="29.1" width="1.8" height="3.6" fill="#e9d68a" opacity="0.66"/><rect x="333.2" y="30.1" width="2.2" height="5.2" fill="#e9d68a" opacity="0.39"/><rect x="306.8" y="28.8" width="1.8" height="4.1" fill="#e9d68a" opacity="0.39"/><rect x="351.2" y="25.2" width="44.0" height="12.6" fill="#0e0d18"/><rect x="392.2" y="29.4" width="1.7" height="3.2" fill="#e9d68a" opacity="0.69"/><rect x="371.0" y="29.3" width="3.0" height="3.8" fill="#e9d68a" opacity="0.61"/><rect x="377.6" y="28.9" width="1.4" height="4.6" fill="#e9d68a" opacity="0.50"/><rect x="69.5" y="44.5" width="44.7" height="12.6" fill="#0e0d18"/><rect x="105.4" y="47.8" width="2.6" height="4.3" fill="#8f8fa0" opacity="0.78"/><rect x="103.6" y="48.4" width="2.1" height="4.4" fill="#8f8fa0" opacity="0.50"/><rect x="110.0" y="48.0" width="2.2" height="7.4" fill="#8f8fa0" opacity="0.65"/><rect x="117.2" y="44.5" width="44.3" height="12.6" fill="#0e0d18"/><rect x="134.9" y="47.5" width="1.9" height="6.4" fill="#8f8fa0" opacity="0.63"/><rect x="148.8" y="47.5" width="2.3" height="7.2" fill="#8f8fa0" opacity="0.55"/><rect x="146.3" y="47.3" width="3.1" height="5.7" fill="#8f8fa0" opacity="0.46"/><rect x="124.6" y="48.4" width="2.3" height="3.4" fill="#8f8fa0" opacity="0.80"/><rect x="155.0" y="48.2" width="1.4" height="6.7" fill="#8f8fa0" opacity="0.57"/><rect x="147.1" y="48.3" width="1.7" height="6.8" fill="#8f8fa0" opacity="0.79"/><rect x="164.5" y="44.5" width="42.7" height="12.6" fill="#0e0d18"/><rect x="164.9" y="45.5" width="41.9" height="10.8" fill="#eceadf" opacity="0.55"/><rect x="182.7" y="49.1" width="2.2" height="4.3" fill="#15131f" opacity="0.75"/><rect x="170.6" y="48.8" width="4.2" height="5.1" fill="#15131f" opacity="0.59"/><rect x="195.2" y="49.6" width="1.5" height="4.7" fill="#15131f" opacity="0.78"/><rect x="187.4" y="51.1" width="4.5" height="3.8" fill="#15131f" opacity="0.64"/><rect x="210.2" y="44.5" width="44.0" height="12.6" fill="#0e0d18"/><rect x="210.6" y="45.5" width="21.2" height="10.8" fill="#eceadf" opacity="0.88"/><rect x="220.6" y="50.7" width="3.1" height="3.5" fill="#15131f" opacity="0.53"/><rect x="223.1" y="50.8" width="2.3" height="4.8" fill="#15131f" opacity="0.47"/><rect x="223.9" y="51.3" width="4.3" height="3.7" fill="#15131f" opacity="0.72"/><rect x="225.2" y="52.4" width="3.2" height="2.6" fill="#15131f" opacity="0.65"/><rect x="221.2" y="52.0" width="4.6" height="3.8" fill="#15131f" opacity="0.66"/><rect x="257.2" y="44.5" width="44.0" height="12.6" fill="#0e0d18"/><rect x="257.6" y="45.5" width="43.2" height="10.8" fill="#8f8fa0" opacity="0.55"/><rect x="258.8" y="49.1" width="4.5" height="5.4" fill="#15131f" opacity="0.48"/><rect x="288.7" y="49.6" width="3.7" height="3.7" fill="#15131f" opacity="0.48"/><rect x="271.0" y="51.2" width="3.4" height="5.4" fill="#15131f" opacity="0.70"/><rect x="292.8" y="50.5" width="3.4" height="4.4" fill="#15131f" opacity="0.54"/><rect x="284.9" y="49.6" width="2.3" height="2.8" fill="#15131f" opacity="0.84"/><rect x="287.9" y="51.3" width="1.9" height="3.0" fill="#15131f" opacity="0.57"/><rect x="304.2" y="44.5" width="44.0" height="12.6" fill="#0e0d18"/><rect x="307.0" y="49.0" width="1.8" height="4.7" fill="#8f8fa0" opacity="0.42"/><rect x="326.4" y="48.4" width="2.8" height="3.8" fill="#8f8fa0" opacity="0.39"/><rect x="340.0" y="48.5" width="1.7" height="7.1" fill="#8f8fa0" opacity="0.41"/><rect x="351.2" y="44.5" width="44.0" height="12.6" fill="#0e0d18"/><rect x="351.6" y="45.5" width="43.2" height="10.8" fill="#eceadf" opacity="0.88"/><rect x="377.1" y="50.3" width="3.8" height="5.2" fill="#15131f" opacity="0.64"/><rect x="363.4" y="50.7" width="1.8" height="5.3" fill="#15131f" opacity="0.85"/><rect x="363.9" y="52.3" width="3.9" height="3.9" fill="#15131f" opacity="0.57"/><rect x="391.2" y="51.9" width="1.9" height="3.6" fill="#15131f" opacity="0.59"/><rect x="363.7" y="51.3" width="1.6" height="5.0" fill="#15131f" opacity="0.61"/><rect x="352.5" y="52.0" width="4.2" height="5.4" fill="#15131f" opacity="0.81"/><rect x="69.5" y="63.8" width="44.7" height="12.6" fill="#0e0d18"/><rect x="69.9" y="64.8" width="43.9" height="10.8" fill="#eceadf" opacity="0.88"/><rect x="103.6" y="71.4" width="4.2" height="3.2" fill="#15131f" opacity="0.77"/><rect x="79.2" y="68.6" width="2.4" height="4.8" fill="#15131f" opacity="0.76"/><rect x="97.5" y="68.3" width="1.8" height="4.4" fill="#15131f" opacity="0.47"/><rect x="101.8" y="67.9" width="2.8" height="2.9" fill="#15131f" opacity="0.81"/><rect x="83.5" y="69.5" width="2.2" height="4.9" fill="#15131f" opacity="0.80"/><rect x="85.0" y="69.8" width="2.5" height="3.0" fill="#15131f" opacity="0.82"/><rect x="117.2" y="63.8" width="44.3" height="12.6" fill="#0e0d18"/><rect x="117.6" y="64.8" width="43.5" height="10.8" fill="#eceadf" opacity="0.88"/><rect x="156.2" y="69.0" width="4.5" height="4.9" fill="#15131f" opacity="0.64"/><rect x="121.2" y="70.8" width="2.3" height="4.5" fill="#15131f" opacity="0.72"/><rect x="133.8" y="71.2" width="3.5" height="2.8" fill="#15131f" opacity="0.61"/><rect x="128.6" y="68.3" width="2.8" height="4.7" fill="#15131f" opacity="0.55"/><rect x="133.2" y="70.4" width="2.8" height="4.5" fill="#15131f" opacity="0.64"/><rect x="142.5" y="71.6" width="2.6" height="4.3" fill="#15131f" opacity="0.71"/><rect x="164.5" y="63.8" width="42.7" height="12.6" fill="#0e0d18"/><rect x="164.9" y="64.8" width="41.9" height="10.8" fill="#e9d68a" opacity="0.55"/><rect x="199.8" y="69.0" width="2.9" height="2.9" fill="#15131f" opacity="0.83"/><rect x="177.0" y="69.8" width="1.8" height="5.2" fill="#15131f" opacity="0.50"/><rect x="182.6" y="70.5" width="4.1" height="5.3" fill="#15131f" opacity="0.62"/><rect x="193.5" y="68.4" width="3.0" height="2.8" fill="#15131f" opacity="0.65"/><rect x="180.9" y="71.6" width="1.6" height="3.6" fill="#15131f" opacity="0.63"/><rect x="201.3" y="71.2" width="1.8" height="4.6" fill="#15131f" opacity="0.67"/><rect x="210.2" y="63.8" width="44.0" height="12.6" fill="#0e0d18"/><rect x="257.2" y="63.8" width="44.0" height="12.6" fill="#0e0d18"/><rect x="257.6" y="64.8" width="43.2" height="10.8" fill="#eceadf" opacity="0.88"/><rect x="260.6" y="68.9" width="4.9" height="5.3" fill="#15131f" opacity="0.78"/><rect x="261.8" y="68.6" width="3.7" height="5.4" fill="#15131f" opacity="0.47"/><rect x="271.2" y="71.8" width="4.3" height="3.1" fill="#15131f" opacity="0.78"/><rect x="279.8" y="70.1" width="4.3" height="3.2" fill="#15131f" opacity="0.76"/><rect x="289.0" y="70.2" width="2.5" height="5.5" fill="#15131f" opacity="0.85"/><rect x="304.2" y="63.8" width="44.0" height="12.6" fill="#0e0d18"/><rect x="337.1" y="66.6" width="2.9" height="3.6" fill="#8f8fa0" opacity="0.51"/><rect x="336.7" y="67.8" width="1.2" height="4.2" fill="#8f8fa0" opacity="0.41"/><rect x="322.0" y="66.6" width="1.3" height="5.0" fill="#8f8fa0" opacity="0.51"/><rect x="328.9" y="67.4" width="1.6" height="5.8" fill="#8f8fa0" opacity="0.68"/><rect x="341.6" y="67.9" width="1.8" height="5.9" fill="#8f8fa0" opacity="0.36"/><rect x="351.2" y="63.8" width="44.0" height="12.6" fill="#0e0d18"/><rect x="386.1" y="67.4" width="1.4" height="6.2" fill="#8f8fa0" opacity="0.55"/><rect x="388.2" y="67.1" width="1.5" height="3.6" fill="#8f8fa0" opacity="0.63"/><rect x="375.6" y="68.1" width="2.0" height="5.7" fill="#8f8fa0" opacity="0.48"/><rect x="372.4" y="67.4" width="2.8" height="3.5" fill="#8f8fa0" opacity="0.64"/><rect x="387.3" y="67.7" width="2.9" height="4.9" fill="#8f8fa0" opacity="0.75"/><rect x="368.8" y="68.4" width="2.0" height="6.3" fill="#8f8fa0" opacity="0.49"/><rect x="69.5" y="83.1" width="44.7" height="12.6" fill="#0e0d18"/><rect x="69.9" y="84.1" width="43.9" height="10.8" fill="#eceadf" opacity="0.88"/><rect x="96.9" y="88.6" width="2.0" height="5.3" fill="#15131f" opacity="0.48"/><rect x="103.5" y="87.5" width="1.8" height="4.7" fill="#15131f" opacity="0.77"/><rect x="92.6" y="89.4" width="3.5" height="3.5" fill="#15131f" opacity="0.50"/><rect x="84.5" y="89.8" width="4.1" height="5.1" fill="#15131f" opacity="0.74"/><rect x="108.9" y="89.5" width="2.7" height="4.2" fill="#15131f" opacity="0.54"/><rect x="117.2" y="83.1" width="44.3" height="12.6" fill="#0e0d18"/><rect x="127.2" y="85.9" width="2.9" height="4.7" fill="#8f8fa0" opacity="0.69"/><rect x="141.3" y="87.6" width="2.9" height="7.4" fill="#8f8fa0" opacity="0.72"/><rect x="142.9" y="87.2" width="1.3" height="7.2" fill="#8f8fa0" opacity="0.72"/><rect x="129.0" y="86.1" width="2.6" height="4.4" fill="#8f8fa0" opacity="0.50"/><rect x="118.4" y="87.8" width="2.3" height="4.8" fill="#8f8fa0" opacity="0.41"/><rect x="143.7" y="85.7" width="2.7" height="4.0" fill="#8f8fa0" opacity="0.54"/><rect x="164.5" y="83.1" width="42.7" height="12.6" fill="#0e0d18"/><rect x="164.9" y="84.1" width="41.9" height="10.8" fill="#eceadf" opacity="0.55"/><rect x="171.4" y="88.3" width="2.6" height="5.3" fill="#15131f" opacity="0.69"/><rect x="198.8" y="87.7" width="4.1" height="2.6" fill="#15131f" opacity="0.48"/><rect x="182.2" y="88.8" width="3.6" height="3.7" fill="#15131f" opacity="0.54"/><rect x="184.8" y="88.5" width="1.9" height="4.5" fill="#15131f" opacity="0.69"/><rect x="185.4" y="88.3" width="2.3" height="5.5" fill="#15131f" opacity="0.47"/><rect x="210.2" y="83.1" width="44.0" height="12.6" fill="#0e0d18"/><rect x="223.3" y="86.1" width="1.5" height="4.1" fill="#8f8fa0" opacity="0.50"/><rect x="211.5" y="87.5" width="1.6" height="4.7" fill="#8f8fa0" opacity="0.67"/><rect x="231.2" y="87.7" width="2.8" height="3.3" fill="#8f8fa0" opacity="0.74"/><rect x="212.9" y="85.6" width="3.0" height="6.9" fill="#8f8fa0" opacity="0.61"/><rect x="257.2" y="83.1" width="44.0" height="12.6" fill="#0e0d18"/><rect x="257.6" y="84.1" width="43.2" height="10.8" fill="#eceadf" opacity="0.88"/><rect x="285.9" y="88.8" width="1.9" height="2.6" fill="#15131f" opacity="0.58"/><rect x="289.5" y="89.6" width="4.4" height="5.3" fill="#15131f" opacity="0.49"/><rect x="291.1" y="88.1" width="3.6" height="4.1" fill="#15131f" opacity="0.61"/><rect x="270.3" y="88.5" width="2.7" height="3.0" fill="#15131f" opacity="0.65"/><rect x="262.6" y="89.1" width="4.7" height="3.5" fill="#15131f" opacity="0.74"/><rect x="290.1" y="90.4" width="2.3" height="2.9" fill="#15131f" opacity="0.53"/><rect x="304.2" y="83.1" width="44.0" height="12.6" fill="#0e0d18"/><rect x="324.4" y="84.1" width="23.4" height="10.8" fill="#eceadf" opacity="0.88"/><rect x="339.6" y="89.7" width="2.1" height="4.8" fill="#15131f" opacity="0.65"/><rect x="339.5" y="90.1" width="3.1" height="5.3" fill="#15131f" opacity="0.68"/><rect x="337.2" y="89.6" width="4.5" height="4.4" fill="#15131f" opacity="0.51"/><rect x="326.3" y="88.9" width="2.6" height="3.3" fill="#15131f" opacity="0.47"/><rect x="351.2" y="83.1" width="44.0" height="12.6" fill="#0e0d18"/><rect x="351.6" y="84.1" width="43.2" height="10.8" fill="#eceadf" opacity="0.88"/><rect x="364.3" y="88.9" width="1.7" height="5.0" fill="#15131f" opacity="0.48"/><rect x="385.9" y="90.5" width="3.7" height="4.0" fill="#15131f" opacity="0.64"/><rect x="373.8" y="90.3" width="4.6" height="3.8" fill="#15131f" opacity="0.77"/><rect x="69.5" y="102.4" width="44.7" height="12.6" fill="#0e0d18"/><rect x="90.0" y="103.4" width="23.8" height="10.8" fill="#eceadf" opacity="0.88"/><rect x="96.9" y="108.3" width="2.0" height="2.7" fill="#15131f" opacity="0.49"/><rect x="108.2" y="107.8" width="4.0" height="4.0" fill="#15131f" opacity="0.52"/><rect x="95.5" y="108.2" width="3.0" height="4.1" fill="#15131f" opacity="0.51"/><rect x="97.9" y="107.5" width="2.9" height="3.5" fill="#15131f" opacity="0.69"/><rect x="117.2" y="102.4" width="44.3" height="12.6" fill="#0e0d18"/><rect x="120.9" y="105.1" width="2.6" height="4.3" fill="#eceadf" opacity="0.68"/><rect x="144.7" y="107.2" width="2.9" height="4.5" fill="#eceadf" opacity="0.61"/><rect x="123.9" y="105.8" width="3.1" height="6.1" fill="#eceadf" opacity="0.53"/><rect x="142.2" y="107.2" width="1.8" height="4.7" fill="#eceadf" opacity="0.71"/><rect x="151.0" y="106.6" width="2.9" height="6.3" fill="#eceadf" opacity="0.66"/><rect x="164.5" y="102.4" width="42.7" height="12.6" fill="#0e0d18"/><rect x="164.9" y="103.4" width="41.9" height="10.8" fill="#e2a35c" opacity="0.55"/><rect x="189.9" y="108.1" width="2.8" height="3.6" fill="#15131f" opacity="0.52"/><rect x="173.6" y="110.2" width="3.2" height="3.2" fill="#15131f" opacity="0.51"/><rect x="168.4" y="109.8" width="1.9" height="4.8" fill="#15131f" opacity="0.78"/><rect x="210.2" y="102.4" width="44.0" height="12.6" fill="#0e0d18"/><rect x="210.6" y="103.4" width="43.2" height="10.8" fill="#eceadf" opacity="0.55"/><rect x="237.0" y="109.9" width="3.7" height="4.3" fill="#15131f" opacity="0.51"/><rect x="218.3" y="109.2" width="3.7" height="5.2" fill="#15131f" opacity="0.74"/><rect x="212.9" y="107.9" width="4.0" height="5.4" fill="#15131f" opacity="0.69"/><rect x="257.2" y="102.4" width="44.0" height="12.6" fill="#0e0d18"/><rect x="257.6" y="103.4" width="43.2" height="10.8" fill="#eceadf" opacity="0.55"/><rect x="267.3" y="107.4" width="4.9" height="4.9" fill="#15131f" opacity="0.81"/><rect x="265.8" y="109.1" width="3.5" height="3.8" fill="#15131f" opacity="0.76"/><rect x="288.5" y="108.4" width="3.0" height="3.0" fill="#15131f" opacity="0.53"/><rect x="281.8" y="109.9" width="1.7" height="3.9" fill="#15131f" opacity="0.60"/><rect x="294.6" y="109.2" width="3.3" height="2.9" fill="#15131f" opacity="0.48"/><rect x="264.5" y="108.2" width="3.3" height="5.0" fill="#15131f" opacity="0.49"/><rect x="304.2" y="102.4" width="44.0" height="12.6" fill="#0e0d18"/><rect x="337.9" y="107.1" width="3.1" height="4.9" fill="#eceadf" opacity="0.53"/><rect x="320.2" y="105.9" width="1.4" height="4.0" fill="#eceadf" opacity="0.49"/><rect x="309.2" y="106.7" width="1.9" height="3.7" fill="#eceadf" opacity="0.37"/><rect x="341.9" y="106.1" width="2.9" height="6.4" fill="#eceadf" opacity="0.56"/><rect x="351.2" y="102.4" width="44.0" height="12.6" fill="#0e0d18"/><rect x="388.4" y="104.9" width="1.6" height="3.7" fill="#eceadf" opacity="0.77"/><rect x="376.6" y="106.0" width="2.8" height="4.1" fill="#eceadf" opacity="0.40"/><rect x="361.7" y="106.5" width="2.4" height="3.3" fill="#eceadf" opacity="0.73"/><rect x="69.5" y="121.7" width="44.7" height="12.6" fill="#0e0d18"/><rect x="117.2" y="121.7" width="44.3" height="12.6" fill="#0e0d18"/><rect x="143.7" y="125.6" width="2.6" height="4.3" fill="#eceadf" opacity="0.35"/><rect x="132.4" y="125.6" width="1.6" height="6.0" fill="#eceadf" opacity="0.59"/><rect x="132.7" y="126.6" width="2.3" height="6.5" fill="#eceadf" opacity="0.58"/><rect x="164.5" y="121.7" width="42.7" height="12.6" fill="#0e0d18"/><rect x="180.6" y="125.4" width="2.5" height="7.4" fill="#eceadf" opacity="0.46"/><rect x="166.1" y="126.2" width="1.9" height="6.3" fill="#eceadf" opacity="0.63"/><rect x="195.4" y="126.0" width="1.9" height="3.2" fill="#eceadf" opacity="0.60"/><rect x="210.2" y="121.7" width="44.0" height="12.6" fill="#0e0d18"/><rect x="230.4" y="122.7" width="23.4" height="10.8" fill="#eceadf" opacity="0.88"/><rect x="246.9" y="128.4" width="4.9" height="3.9" fill="#15131f" opacity="0.52"/><rect x="233.6" y="128.6" width="4.8" height="2.6" fill="#15131f" opacity="0.53"/><rect x="246.2" y="129.2" width="2.6" height="3.4" fill="#15131f" opacity="0.61"/><rect x="246.7" y="127.6" width="1.6" height="4.4" fill="#15131f" opacity="0.56"/><rect x="257.2" y="121.7" width="44.0" height="12.6" fill="#0e0d18"/><rect x="257.6" y="122.7" width="43.2" height="10.8" fill="#e2a35c" opacity="0.88"/><rect x="292.0" y="127.0" width="1.9" height="3.6" fill="#15131f" opacity="0.81"/><rect x="287.2" y="129.3" width="2.9" height="5.4" fill="#15131f" opacity="0.65"/><rect x="277.6" y="129.4" width="3.3" height="4.9" fill="#15131f" opacity="0.74"/><rect x="304.2" y="121.7" width="44.0" height="12.6" fill="#0e0d18"/><rect x="304.6" y="122.7" width="43.2" height="10.8" fill="#e9d68a" opacity="0.55"/><rect x="322.0" y="129.7" width="2.1" height="3.4" fill="#15131f" opacity="0.49"/><rect x="318.0" y="126.9" width="3.1" height="4.7" fill="#15131f" opacity="0.52"/><rect x="322.5" y="127.5" width="4.0" height="5.2" fill="#15131f" opacity="0.70"/><rect x="351.2" y="121.7" width="44.0" height="12.6" fill="#0e0d18"/><rect x="371.4" y="122.7" width="23.4" height="10.8" fill="#eceadf" opacity="0.88"/><rect x="377.3" y="129.6" width="4.8" height="2.7" fill="#15131f" opacity="0.71"/><rect x="379.0" y="128.9" width="3.9" height="5.4" fill="#15131f" opacity="0.51"/><rect x="383.7" y="128.8" width="1.6" height="2.7" fill="#15131f" opacity="0.76"/><rect x="379.0" y="127.2" width="3.5" height="4.3" fill="#15131f" opacity="0.72"/><rect x="390.2" y="127.2" width="4.2" height="4.2" fill="#15131f" opacity="0.66"/><rect x="379.6" y="128.3" width="2.4" height="2.8" fill="#15131f" opacity="0.74"/><rect x="69.5" y="141.0" width="44.7" height="12.6" fill="#0e0d18"/><rect x="69.9" y="142.0" width="43.9" height="10.8" fill="#e9d68a" opacity="0.88"/><rect x="91.1" y="148.7" width="1.9" height="4.8" fill="#15131f" opacity="0.73"/><rect x="79.0" y="147.4" width="3.9" height="5.5" fill="#15131f" opacity="0.53"/><rect x="75.9" y="145.3" width="2.1" height="4.6" fill="#15131f" opacity="0.85"/><rect x="102.7" y="148.9" width="5.0" height="4.5" fill="#15131f" opacity="0.73"/><rect x="92.3" y="146.2" width="2.5" height="3.0" fill="#15131f" opacity="0.73"/><rect x="98.3" y="145.7" width="2.8" height="3.2" fill="#15131f" opacity="0.84"/><rect x="117.2" y="141.0" width="44.3" height="12.6" fill="#0e0d18"/><rect x="117.6" y="142.0" width="43.5" height="10.8" fill="#e9d68a" opacity="0.88"/><rect x="127.5" y="147.0" width="2.8" height="4.2" fill="#15131f" opacity="0.64"/><rect x="156.8" y="145.5" width="4.6" height="2.7" fill="#15131f" opacity="0.61"/><rect x="146.4" y="146.9" width="2.9" height="3.7" fill="#15131f" opacity="0.68"/><rect x="123.1" y="146.3" width="1.8" height="3.9" fill="#15131f" opacity="0.66"/><rect x="164.5" y="141.0" width="42.7" height="12.6" fill="#0e0d18"/><rect x="164.9" y="142.0" width="41.9" height="10.8" fill="#e9d68a" opacity="0.88"/><rect x="198.6" y="148.1" width="3.7" height="3.0" fill="#15131f" opacity="0.84"/><rect x="181.8" y="148.6" width="1.7" height="2.9" fill="#15131f" opacity="0.51"/><rect x="171.7" y="146.3" width="4.0" height="3.5" fill="#15131f" opacity="0.83"/><rect x="199.2" y="148.4" width="2.4" height="4.4" fill="#15131f" opacity="0.67"/><rect x="210.2" y="141.0" width="44.0" height="12.6" fill="#0e0d18"/><rect x="210.6" y="142.0" width="43.2" height="10.8" fill="#e9d68a" opacity="0.55"/><rect x="235.6" y="147.5" width="1.8" height="4.4" fill="#15131f" opacity="0.69"/><rect x="233.8" y="145.7" width="3.7" height="5.2" fill="#15131f" opacity="0.59"/><rect x="247.2" y="145.2" width="4.5" height="2.7" fill="#15131f" opacity="0.83"/><rect x="241.3" y="146.1" width="2.2" height="4.2" fill="#15131f" opacity="0.70"/><rect x="257.2" y="141.0" width="44.0" height="12.6" fill="#0e0d18"/><rect x="257.6" y="142.0" width="43.2" height="10.8" fill="#e9d68a" opacity="0.55"/><rect x="277.6" y="147.5" width="2.5" height="5.4" fill="#15131f" opacity="0.64"/><rect x="289.6" y="147.7" width="2.5" height="2.7" fill="#15131f" opacity="0.47"/><rect x="275.3" y="146.9" width="2.2" height="4.3" fill="#15131f" opacity="0.58"/><rect x="304.2" y="141.0" width="44.0" height="12.6" fill="#0e0d18"/><rect x="304.6" y="142.0" width="43.2" height="10.8" fill="#e9d68a" opacity="0.88"/><rect x="333.8" y="148.4" width="4.9" height="2.9" fill="#15131f" opacity="0.60"/><rect x="327.1" y="146.3" width="3.1" height="3.3" fill="#15131f" opacity="0.55"/><rect x="309.0" y="146.2" width="2.8" height="4.3" fill="#15131f" opacity="0.55"/><rect x="338.9" y="145.6" width="2.6" height="4.2" fill="#15131f" opacity="0.58"/><rect x="335.0" y="147.0" width="3.3" height="4.0" fill="#15131f" opacity="0.57"/><rect x="351.2" y="141.0" width="44.0" height="12.6" fill="#0e0d18"/><rect x="351.6" y="142.0" width="43.2" height="10.8" fill="#e9d68a" opacity="0.88"/><rect x="355.7" y="146.6" width="3.1" height="3.2" fill="#15131f" opacity="0.68"/><rect x="354.1" y="146.1" width="3.6" height="5.0" fill="#15131f" opacity="0.72"/><rect x="363.3" y="145.0" width="1.9" height="2.9" fill="#15131f" opacity="0.56"/><rect x="69.5" y="160.3" width="44.7" height="12.6" fill="#0e0d18"/><rect x="101.6" y="163.7" width="2.0" height="5.6" fill="#eceadf" opacity="0.44"/><rect x="93.0" y="163.0" width="2.2" height="6.4" fill="#eceadf" opacity="0.48"/><rect x="110.8" y="164.5" width="1.4" height="7.4" fill="#eceadf" opacity="0.53"/><rect x="102.9" y="163.6" width="3.1" height="6.4" fill="#eceadf" opacity="0.44"/><rect x="91.2" y="164.1" width="1.3" height="3.6" fill="#eceadf" opacity="0.50"/><rect x="117.2" y="160.3" width="44.3" height="12.6" fill="#0e0d18"/><rect x="139.1" y="163.2" width="3.0" height="3.6" fill="#eceadf" opacity="0.77"/><rect x="131.0" y="163.8" width="2.4" height="6.8" fill="#eceadf" opacity="0.62"/><rect x="138.6" y="164.1" width="2.2" height="5.5" fill="#eceadf" opacity="0.56"/><rect x="118.9" y="163.6" width="1.4" height="4.9" fill="#eceadf" opacity="0.49"/><rect x="154.4" y="165.0" width="2.5" height="5.7" fill="#eceadf" opacity="0.47"/><rect x="144.6" y="165.2" width="2.4" height="4.0" fill="#eceadf" opacity="0.37"/><rect x="164.5" y="160.3" width="42.7" height="12.6" fill="#0e0d18"/><rect x="164.9" y="161.3" width="41.9" height="10.8" fill="#eceadf" opacity="0.55"/><rect x="171.9" y="166.8" width="3.7" height="5.0" fill="#15131f" opacity="0.51"/><rect x="191.2" y="164.4" width="4.8" height="2.8" fill="#15131f" opacity="0.46"/><rect x="177.3" y="164.9" width="3.9" height="3.7" fill="#15131f" opacity="0.76"/><rect x="200.2" y="167.8" width="4.1" height="2.7" fill="#15131f" opacity="0.51"/><rect x="173.3" y="165.6" width="3.8" height="4.1" fill="#15131f" opacity="0.58"/><rect x="172.0" y="167.9" width="2.7" height="3.6" fill="#15131f" opacity="0.76"/><rect x="210.2" y="160.3" width="44.0" height="12.6" fill="#0e0d18"/><rect x="235.6" y="163.3" width="1.7" height="5.5" fill="#8f8fa0" opacity="0.45"/><rect x="250.1" y="163.5" width="1.8" height="3.9" fill="#8f8fa0" opacity="0.67"/><rect x="223.9" y="163.7" width="3.1" height="6.6" fill="#8f8fa0" opacity="0.47"/><rect x="216.1" y="164.5" width="2.0" height="7.4" fill="#8f8fa0" opacity="0.72"/><rect x="249.4" y="164.8" width="1.8" height="4.3" fill="#8f8fa0" opacity="0.67"/><rect x="257.2" y="160.3" width="44.0" height="12.6" fill="#0e0d18"/><rect x="295.2" y="164.4" width="2.7" height="4.0" fill="#8f8fa0" opacity="0.72"/><rect x="269.0" y="164.2" width="1.7" height="3.5" fill="#8f8fa0" opacity="0.68"/><rect x="267.8" y="162.9" width="3.0" height="4.0" fill="#8f8fa0" opacity="0.45"/><rect x="262.2" y="163.6" width="2.1" height="6.1" fill="#8f8fa0" opacity="0.41"/><rect x="296.8" y="165.2" width="1.5" height="5.9" fill="#8f8fa0" opacity="0.75"/><rect x="304.2" y="160.3" width="44.0" height="12.6" fill="#0e0d18"/><rect x="324.3" y="163.3" width="3.1" height="4.4" fill="#eceadf" opacity="0.64"/><rect x="341.5" y="163.0" width="2.3" height="5.4" fill="#eceadf" opacity="0.68"/><rect x="342.7" y="165.1" width="1.6" height="7.0" fill="#eceadf" opacity="0.43"/><rect x="342.0" y="165.3" width="2.0" height="5.2" fill="#eceadf" opacity="0.77"/><rect x="343.7" y="165.1" width="3.0" height="3.0" fill="#eceadf" opacity="0.61"/><rect x="309.5" y="165.3" width="1.8" height="7.5" fill="#eceadf" opacity="0.59"/><rect x="351.2" y="160.3" width="44.0" height="12.6" fill="#0e0d18"/><rect x="351.6" y="161.3" width="21.2" height="10.8" fill="#e9d68a" opacity="0.88"/><rect x="367.3" y="164.8" width="3.3" height="3.3" fill="#15131f" opacity="0.77"/><rect x="357.8" y="167.2" width="3.8" height="4.7" fill="#15131f" opacity="0.46"/><rect x="357.9" y="165.5" width="3.9" height="3.1" fill="#15131f" opacity="0.69"/><rect x="363.1" y="165.9" width="3.0" height="3.5" fill="#15131f" opacity="0.61"/><rect x="353.8" y="168.2" width="3.2" height="5.3" fill="#15131f" opacity="0.45"/><rect x="358.7" y="166.1" width="2.4" height="3.5" fill="#15131f" opacity="0.68"/><rect x="69.5" y="179.6" width="44.7" height="12.6" fill="#0e0d18"/><rect x="81.1" y="183.0" width="1.7" height="6.0" fill="#8f8fa0" opacity="0.56"/><rect x="77.0" y="183.8" width="3.0" height="7.0" fill="#8f8fa0" opacity="0.70"/><rect x="98.6" y="183.7" width="3.1" height="4.7" fill="#8f8fa0" opacity="0.45"/><rect x="117.2" y="179.6" width="44.3" height="12.6" fill="#0e0d18"/><rect x="117.6" y="180.6" width="43.5" height="10.8" fill="#8f8fa0" opacity="0.55"/><rect x="137.0" y="185.4" width="5.0" height="3.6" fill="#15131f" opacity="0.73"/><rect x="154.1" y="186.6" width="4.3" height="5.0" fill="#15131f" opacity="0.75"/><rect x="144.9" y="186.0" width="4.3" height="4.1" fill="#15131f" opacity="0.66"/><rect x="132.4" y="187.3" width="1.9" height="5.0" fill="#15131f" opacity="0.81"/><rect x="164.5" y="179.6" width="42.7" height="12.6" fill="#0e0d18"/><rect x="164.9" y="180.6" width="41.9" height="10.8" fill="#eceadf" opacity="0.55"/><rect x="187.1" y="184.2" width="2.6" height="4.1" fill="#15131f" opacity="0.50"/><rect x="173.2" y="185.9" width="1.8" height="4.0" fill="#15131f" opacity="0.77"/><rect x="182.6" y="185.7" width="3.1" height="2.7" fill="#15131f" opacity="0.63"/><rect x="195.9" y="186.5" width="2.9" height="4.9" fill="#15131f" opacity="0.75"/><rect x="210.2" y="179.6" width="44.0" height="12.6" fill="#0e0d18"/><rect x="213.0" y="183.0" width="1.3" height="7.5" fill="#eceadf" opacity="0.77"/><rect x="214.0" y="184.4" width="1.3" height="4.8" fill="#eceadf" opacity="0.70"/><rect x="241.8" y="184.5" width="2.5" height="4.9" fill="#eceadf" opacity="0.80"/><rect x="257.2" y="179.6" width="44.0" height="12.6" fill="#0e0d18"/><rect x="257.6" y="180.6" width="43.2" height="10.8" fill="#8f8fa0" opacity="0.55"/><rect x="275.7" y="187.3" width="2.8" height="2.7" fill="#15131f" opacity="0.84"/><rect x="292.3" y="184.1" width="4.5" height="2.9" fill="#15131f" opacity="0.85"/><rect x="273.5" y="184.1" width="4.9" height="5.0" fill="#15131f" opacity="0.75"/><rect x="296.4" y="185.5" width="4.0" height="3.8" fill="#15131f" opacity="0.60"/><rect x="267.2" y="185.4" width="2.0" height="3.1" fill="#15131f" opacity="0.80"/><rect x="288.1" y="183.7" width="3.8" height="4.3" fill="#15131f" opacity="0.82"/><rect x="304.2" y="179.6" width="44.0" height="12.6" fill="#0e0d18"/><rect x="304.6" y="180.6" width="43.2" height="10.8" fill="#8f8fa0" opacity="0.55"/><rect x="314.6" y="183.9" width="3.6" height="3.8" fill="#15131f" opacity="0.72"/><rect x="339.2" y="184.6" width="1.7" height="3.8" fill="#15131f" opacity="0.67"/><rect x="334.6" y="186.7" width="2.0" height="5.5" fill="#15131f" opacity="0.54"/><rect x="351.2" y="179.6" width="44.0" height="12.6" fill="#0e0d18"/><rect x="351.6" y="180.6" width="21.2" height="10.8" fill="#eceadf" opacity="0.88"/><rect x="362.0" y="186.7" width="4.4" height="3.2" fill="#15131f" opacity="0.80"/><rect x="369.0" y="185.7" width="2.9" height="3.3" fill="#15131f" opacity="0.67"/><rect x="362.3" y="186.5" width="2.1" height="4.5" fill="#15131f" opacity="0.67"/><rect x="353.0" y="185.0" width="3.8" height="3.6" fill="#15131f" opacity="0.66"/><rect x="364.0" y="185.2" width="2.5" height="3.1" fill="#15131f" opacity="0.67"/><rect x="69.5" y="198.9" width="44.7" height="12.6" fill="#0e0d18"/><rect x="81.2" y="201.9" width="1.4" height="8" fill="#eceadf" opacity=".35"/><rect x="117.2" y="198.9" width="44.3" height="12.6" fill="#0e0d18"/><rect x="137.5" y="199.9" width="23.6" height="10.8" fill="#b8c8e8" opacity="0.88"/><rect x="153.7" y="206.6" width="3.5" height="5.4" fill="#15131f" opacity="0.67"/><rect x="140.7" y="203.9" width="2.2" height="4.4" fill="#15131f" opacity="0.82"/><rect x="154.5" y="203.3" width="4.0" height="3.1" fill="#15131f" opacity="0.56"/><rect x="151.2" y="205.3" width="4.6" height="3.1" fill="#15131f" opacity="0.75"/><rect x="164.5" y="198.9" width="42.7" height="12.6" fill="#0e0d18"/><rect x="210.2" y="198.9" width="44.0" height="12.6" fill="#0e0d18"/><rect x="230.4" y="203.6" width="1.9" height="7.3" fill="#e9d68a" opacity="0.36"/><rect x="248.7" y="203.8" width="1.4" height="7.5" fill="#e9d68a" opacity="0.57"/><rect x="220.9" y="202.9" width="1.6" height="7.1" fill="#e9d68a" opacity="0.60"/><rect x="242.2" y="202.4" width="2.3" height="4.6" fill="#e9d68a" opacity="0.47"/><rect x="257.2" y="198.9" width="44.0" height="12.6" fill="#0e0d18"/><rect x="304.2" y="198.9" width="44.0" height="12.6" fill="#0e0d18"/><rect x="351.2" y="198.9" width="44.0" height="12.6" fill="#0e0d18"/><rect x="391.5" y="201.9" width="1.4" height="8" fill="#eceadf" opacity=".35"/><rect x="69.5" y="218.2" width="44.7" height="12.6" fill="#0e0d18"/><rect x="101.5" y="221.5" width="1.6" height="4.4" fill="#8f8fa0" opacity="0.37"/><rect x="105.7" y="222.6" width="1.2" height="5.5" fill="#8f8fa0" opacity="0.61"/><rect x="99.8" y="221.4" width="1.6" height="4.0" fill="#8f8fa0" opacity="0.61"/><rect x="80.5" y="222.1" width="3.1" height="4.5" fill="#8f8fa0" opacity="0.69"/><rect x="90.4" y="222.5" width="2.7" height="5.1" fill="#8f8fa0" opacity="0.68"/><rect x="84.8" y="221.0" width="2.3" height="3.8" fill="#8f8fa0" opacity="0.75"/><rect x="117.2" y="218.2" width="44.3" height="12.6" fill="#0e0d18"/><rect x="139.3" y="222.8" width="1.3" height="6.7" fill="#8f8fa0" opacity="0.37"/><rect x="118.5" y="221.0" width="2.5" height="3.3" fill="#8f8fa0" opacity="0.42"/><rect x="127.0" y="221.8" width="1.3" height="5.9" fill="#8f8fa0" opacity="0.77"/><rect x="164.5" y="218.2" width="42.7" height="12.6" fill="#0e0d18"/><rect x="191.0" y="220.7" width="2.3" height="4.9" fill="#8f8fa0" opacity="0.36"/><rect x="193.4" y="222.0" width="1.8" height="5.3" fill="#8f8fa0" opacity="0.66"/><rect x="182.2" y="223.0" width="1.6" height="7.1" fill="#8f8fa0" opacity="0.59"/><rect x="174.8" y="222.2" width="1.7" height="4.6" fill="#8f8fa0" opacity="0.71"/><rect x="168.6" y="223.1" width="2.1" height="4.1" fill="#8f8fa0" opacity="0.66"/><rect x="177.1" y="222.8" width="1.4" height="7.5" fill="#8f8fa0" opacity="0.64"/><rect x="210.2" y="218.2" width="44.0" height="12.6" fill="#0e0d18"/><rect x="214.9" y="221.6" width="2.3" height="3.3" fill="#9a7f96" opacity="0.35"/><rect x="218.1" y="221.9" width="2.1" height="6.5" fill="#9a7f96" opacity="0.60"/><rect x="245.5" y="220.9" width="2.3" height="3.2" fill="#9a7f96" opacity="0.45"/><rect x="257.2" y="218.2" width="44.0" height="12.6" fill="#0e0d18"/><rect x="304.2" y="218.2" width="44.0" height="12.6" fill="#0e0d18"/><rect x="351.2" y="218.2" width="44.0" height="12.6" fill="#0e0d18"/><rect x="69.5" y="237.5" width="44.7" height="12.6" fill="#0e0d18"/><rect x="108.1" y="241.7" width="1.8" height="5.4" fill="#8f8fa0" opacity="0.65"/><rect x="77.8" y="242.1" width="1.2" height="3.9" fill="#8f8fa0" opacity="0.41"/><rect x="103.9" y="242.1" width="3.1" height="4.3" fill="#8f8fa0" opacity="0.60"/><rect x="117.2" y="237.5" width="44.3" height="12.6" fill="#0e0d18"/><rect x="164.5" y="237.5" width="42.7" height="12.6" fill="#0e0d18"/><rect x="210.2" y="237.5" width="44.0" height="12.6" fill="#0e0d18"/><rect x="226.6" y="241.8" width="2.8" height="6.1" fill="#8f8fa0" opacity="0.39"/><rect x="241.0" y="240.9" width="1.4" height="4.0" fill="#8f8fa0" opacity="0.38"/><rect x="235.4" y="241.5" width="2.4" height="7.4" fill="#8f8fa0" opacity="0.50"/><rect x="236.6" y="242.0" width="2.1" height="4.0" fill="#8f8fa0" opacity="0.60"/><rect x="226.2" y="240.5" width="2.4" height="4.7" fill="#8f8fa0" opacity="0.70"/><rect x="257.2" y="237.5" width="44.0" height="12.6" fill="#0e0d18"/><rect x="290.1" y="241.8" width="1.4" height="3.7" fill="#8f8fa0" opacity="0.67"/><rect x="283.6" y="241.8" width="1.8" height="3.5" fill="#8f8fa0" opacity="0.35"/><rect x="270.5" y="240.9" width="1.7" height="3.6" fill="#8f8fa0" opacity="0.43"/><rect x="276.2" y="241.4" width="2.0" height="3.1" fill="#8f8fa0" opacity="0.51"/><rect x="261.9" y="241.5" width="1.8" height="4.7" fill="#8f8fa0" opacity="0.48"/><rect x="304.2" y="237.5" width="44.0" height="12.6" fill="#0e0d18"/><rect x="336.4" y="241.8" width="2.3" height="7.5" fill="#8f8fa0" opacity="0.46"/><rect x="326.0" y="241.7" width="1.5" height="4.2" fill="#8f8fa0" opacity="0.47"/><rect x="311.0" y="240.4" width="1.8" height="4.3" fill="#8f8fa0" opacity="0.70"/><rect x="319.6" y="242.4" width="2.6" height="5.2" fill="#8f8fa0" opacity="0.63"/><rect x="323.5" y="240.3" width="1.2" height="4.8" fill="#8f8fa0" opacity="0.73"/><rect x="320.4" y="242.2" width="2.1" height="4.9" fill="#8f8fa0" opacity="0.72"/><rect x="351.2" y="237.5" width="44.0" height="12.6" fill="#0e0d18"/><rect x="69.5" y="256.8" width="44.7" height="12.6" fill="#0e0d18"/><rect x="69.9" y="257.8" width="43.9" height="10.8" fill="#efe6c0" opacity="0.88"/><rect x="82.4" y="263.2" width="3.9" height="3.9" fill="#15131f" opacity="0.52"/><rect x="86.3" y="262.1" width="4.1" height="4.4" fill="#15131f" opacity="0.84"/><rect x="101.5" y="262.1" width="2.5" height="4.9" fill="#15131f" opacity="0.60"/><rect x="107.5" y="261.6" width="5.0" height="3.0" fill="#15131f" opacity="0.76"/><rect x="117.2" y="256.8" width="44.3" height="12.6" fill="#0e0d18"/><rect x="117.6" y="257.8" width="43.5" height="10.8" fill="#efe6c0" opacity="0.88"/><rect x="155.7" y="262.6" width="4.0" height="3.8" fill="#15131f" opacity="0.57"/><rect x="145.4" y="264.1" width="4.3" height="3.7" fill="#15131f" opacity="0.65"/><rect x="143.1" y="261.8" width="3.8" height="4.6" fill="#15131f" opacity="0.77"/><rect x="164.5" y="256.8" width="42.7" height="12.6" fill="#0e0d18"/><rect x="203.9" y="259.8" width="1.4" height="8" fill="#eceadf" opacity=".35"/><rect x="210.2" y="256.8" width="44.0" height="12.6" fill="#0e0d18"/><rect x="210.6" y="257.8" width="43.2" height="10.8" fill="#e9d68a" opacity="0.55"/><rect x="233.9" y="262.9" width="4.7" height="5.1" fill="#15131f" opacity="0.62"/><rect x="212.6" y="264.7" width="4.0" height="4.9" fill="#15131f" opacity="0.69"/><rect x="246.9" y="261.2" width="2.4" height="4.5" fill="#15131f" opacity="0.52"/><rect x="235.1" y="263.1" width="3.8" height="4.4" fill="#15131f" opacity="0.84"/><rect x="224.1" y="264.0" width="1.9" height="2.8" fill="#15131f" opacity="0.54"/><rect x="240.3" y="263.0" width="3.9" height="3.2" fill="#15131f" opacity="0.60"/><rect x="257.2" y="256.8" width="44.0" height="12.6" fill="#0e0d18"/><rect x="289.1" y="260.8" width="2.2" height="4.6" fill="#8f8fa0" opacity="0.36"/><rect x="262.4" y="260.3" width="3.1" height="3.5" fill="#8f8fa0" opacity="0.77"/><rect x="263.9" y="260.1" width="2.1" height="3.9" fill="#8f8fa0" opacity="0.57"/><rect x="277.2" y="260.4" width="2.6" height="4.4" fill="#8f8fa0" opacity="0.49"/><rect x="290.6" y="259.6" width="2.9" height="5.9" fill="#8f8fa0" opacity="0.65"/><rect x="264.8" y="261.8" width="1.7" height="3.8" fill="#8f8fa0" opacity="0.42"/><rect x="304.2" y="256.8" width="44.0" height="12.6" fill="#0e0d18"/><rect x="324.4" y="257.8" width="23.4" height="10.8" fill="#efe6c0" opacity="0.88"/><rect x="343.4" y="261.7" width="2.9" height="3.1" fill="#15131f" opacity="0.71"/><rect x="333.3" y="260.9" width="3.6" height="3.1" fill="#15131f" opacity="0.69"/><rect x="332.5" y="263.6" width="2.2" height="4.8" fill="#15131f" opacity="0.77"/><rect x="326.2" y="261.2" width="4.6" height="3.1" fill="#15131f" opacity="0.58"/><rect x="333.8" y="261.8" width="4.5" height="4.1" fill="#15131f" opacity="0.71"/><rect x="336.5" y="263.2" width="3.6" height="3.5" fill="#15131f" opacity="0.79"/><rect x="351.2" y="256.8" width="44.0" height="12.6" fill="#0e0d18"/><rect x="69.5" y="276.1" width="44.7" height="12.6" fill="#0e0d18"/><rect x="107.9" y="280.1" width="2.5" height="4.4" fill="#8f8fa0" opacity="0.46"/><rect x="75.3" y="279.5" width="1.5" height="4.7" fill="#8f8fa0" opacity="0.62"/><rect x="93.9" y="279.7" width="2.2" height="5.4" fill="#8f8fa0" opacity="0.76"/><rect x="108.4" y="279.0" width="1.5" height="4.3" fill="#8f8fa0" opacity="0.43"/><rect x="104.8" y="280.1" width="2.9" height="7.3" fill="#8f8fa0" opacity="0.57"/><rect x="117.2" y="276.1" width="44.3" height="12.6" fill="#0e0d18"/><rect x="134.9" y="279.1" width="1.4" height="8" fill="#eceadf" opacity=".35"/><rect x="164.5" y="276.1" width="42.7" height="12.6" fill="#0e0d18"/><rect x="181.3" y="279.8" width="2.6" height="5.0" fill="#8f8fa0" opacity="0.43"/><rect x="187.4" y="280.6" width="1.6" height="3.1" fill="#8f8fa0" opacity="0.45"/><rect x="176.7" y="280.6" width="2.3" height="6.5" fill="#8f8fa0" opacity="0.57"/><rect x="185.3" y="280.0" width="1.7" height="5.4" fill="#8f8fa0" opacity="0.80"/><rect x="186.5" y="280.5" width="2.7" height="5.0" fill="#8f8fa0" opacity="0.45"/><rect x="182.0" y="280.4" width="2.5" height="4.1" fill="#8f8fa0" opacity="0.74"/><rect x="210.2" y="276.1" width="44.0" height="12.6" fill="#0e0d18"/><rect x="223.2" y="279.1" width="1.4" height="8" fill="#eceadf" opacity=".35"/><rect x="257.2" y="276.1" width="44.0" height="12.6" fill="#0e0d18"/><rect x="304.2" y="276.1" width="44.0" height="12.6" fill="#0e0d18"/><rect x="322.8" y="281.1" width="2.8" height="4.1" fill="#8f8fa0" opacity="0.71"/><rect x="328.7" y="279.5" width="2.6" height="5.8" fill="#8f8fa0" opacity="0.42"/><rect x="310.8" y="279.1" width="1.6" height="3.3" fill="#8f8fa0" opacity="0.51"/><rect x="351.2" y="276.1" width="44.0" height="12.6" fill="#0e0d18"/><rect x="371.4" y="277.1" width="23.4" height="10.8" fill="#eceadf" opacity="0.88"/><rect x="383.5" y="280.8" width="4.9" height="3.4" fill="#15131f" opacity="0.68"/><rect x="390.3" y="282.2" width="4.7" height="4.9" fill="#15131f" opacity="0.50"/><rect x="386.4" y="281.7" width="1.7" height="3.3" fill="#15131f" opacity="0.71"/><rect x="385.5" y="280.6" width="2.0" height="3.5" fill="#15131f" opacity="0.55"/><rect x="388.2" y="281.7" width="2.0" height="4.4" fill="#15131f" opacity="0.70"/><rect x="69.5" y="295.4" width="44.7" height="12.6" fill="#0e0d18"/><rect x="75.4" y="298.4" width="1.4" height="8" fill="#eceadf" opacity=".35"/><rect x="117.2" y="295.4" width="44.3" height="12.6" fill="#0e0d18"/><rect x="137.5" y="296.4" width="23.6" height="10.8" fill="#6fa6c9" opacity="0.88"/><rect x="145.9" y="302.4" width="3.9" height="5.1" fill="#15131f" opacity="0.63"/><rect x="147.6" y="301.7" width="4.5" height="5.0" fill="#15131f" opacity="0.49"/><rect x="157.0" y="301.9" width="3.9" height="5.1" fill="#15131f" opacity="0.77"/><rect x="164.5" y="295.4" width="42.7" height="12.6" fill="#0e0d18"/><rect x="164.9" y="296.4" width="41.9" height="10.8" fill="#6fa6c9" opacity="0.88"/><rect x="173.7" y="301.1" width="2.2" height="3.3" fill="#15131f" opacity="0.78"/><rect x="178.2" y="301.7" width="3.5" height="4.0" fill="#15131f" opacity="0.59"/><rect x="191.2" y="299.6" width="1.8" height="4.9" fill="#15131f" opacity="0.63"/><rect x="170.2" y="302.8" width="3.0" height="2.5" fill="#15131f" opacity="0.83"/><rect x="173.1" y="302.2" width="2.0" height="4.4" fill="#15131f" opacity="0.51"/><rect x="200.7" y="300.5" width="3.8" height="3.3" fill="#15131f" opacity="0.60"/><rect x="210.2" y="295.4" width="44.0" height="12.6" fill="#0e0d18"/><rect x="210.6" y="296.4" width="43.2" height="10.8" fill="#6fa6c9" opacity="0.88"/><rect x="213.2" y="301.9" width="4.0" height="4.8" fill="#15131f" opacity="0.62"/><rect x="214.8" y="299.8" width="2.2" height="2.7" fill="#15131f" opacity="0.69"/><rect x="231.5" y="301.2" width="1.5" height="3.5" fill="#15131f" opacity="0.50"/><rect x="244.8" y="302.2" width="3.2" height="3.2" fill="#15131f" opacity="0.49"/><rect x="257.2" y="295.4" width="44.0" height="12.6" fill="#0e0d18"/><rect x="257.6" y="296.4" width="43.2" height="10.8" fill="#6fa6c9" opacity="0.88"/><rect x="262.2" y="300.9" width="2.5" height="3.6" fill="#15131f" opacity="0.78"/><rect x="292.3" y="302.0" width="3.9" height="2.7" fill="#15131f" opacity="0.68"/><rect x="282.0" y="300.1" width="2.7" height="3.1" fill="#15131f" opacity="0.75"/><rect x="304.2" y="295.4" width="44.0" height="12.6" fill="#0e0d18"/><rect x="304.6" y="296.4" width="43.2" height="10.8" fill="#6fa6c9" opacity="0.88"/><rect x="329.2" y="301.2" width="2.3" height="5.2" fill="#15131f" opacity="0.51"/><rect x="310.0" y="302.3" width="2.7" height="3.8" fill="#15131f" opacity="0.77"/><rect x="314.9" y="302.0" width="2.4" height="4.3" fill="#15131f" opacity="0.74"/><rect x="316.3" y="303.2" width="1.6" height="5.0" fill="#15131f" opacity="0.80"/><rect x="313.2" y="301.8" width="2.2" height="3.7" fill="#15131f" opacity="0.71"/><rect x="335.8" y="302.6" width="2.3" height="3.7" fill="#15131f" opacity="0.55"/><rect x="351.2" y="295.4" width="44.0" height="12.6" fill="#0e0d18"/><rect x="351.6" y="296.4" width="43.2" height="10.8" fill="#6fa6c9" opacity="0.88"/><rect x="372.8" y="303.3" width="5.0" height="5.3" fill="#15131f" opacity="0.50"/><rect x="385.8" y="301.7" width="2.8" height="4.5" fill="#15131f" opacity="0.76"/><rect x="389.4" y="302.5" width="1.6" height="2.7" fill="#15131f" opacity="0.55"/><rect x="69.5" y="314.7" width="44.7" height="12.6" fill="#0e0d18"/><rect x="108.0" y="319.6" width="2.0" height="4.3" fill="#e9d68a" opacity="0.67"/><rect x="101.7" y="318.3" width="2.0" height="5.9" fill="#e9d68a" opacity="0.59"/><rect x="76.7" y="317.4" width="1.4" height="7.1" fill="#e9d68a" opacity="0.79"/><rect x="117.2" y="314.7" width="44.3" height="12.6" fill="#0e0d18"/><rect x="132.7" y="317.7" width="1.4" height="8" fill="#eceadf" opacity=".35"/><rect x="164.5" y="314.7" width="42.7" height="12.6" fill="#0e0d18"/><rect x="210.2" y="314.7" width="44.0" height="12.6" fill="#0e0d18"/><rect x="257.2" y="314.7" width="44.0" height="12.6" fill="#0e0d18"/><rect x="304.2" y="314.7" width="44.0" height="12.6" fill="#0e0d18"/><rect x="351.2" y="314.7" width="44.0" height="12.6" fill="#0e0d18"/><rect x="370.8" y="317.7" width="1.4" height="8" fill="#eceadf" opacity=".35"/><rect x="66.7" y="0" width="3" height="316" fill="#312d4a"/><rect x="114.4" y="0" width="3" height="316" fill="#312d4a"/><rect x="161.7" y="0" width="3" height="316" fill="#312d4a"/><rect x="207.4" y="0" width="3" height="316" fill="#312d4a"/><rect x="254.4" y="0" width="3" height="316" fill="#312d4a"/><rect x="301.4" y="0" width="3" height="316" fill="#312d4a"/><rect x="348.4" y="0" width="3" height="316" fill="#312d4a"/><rect x="395.4" y="0" width="3" height="316" fill="#312d4a"/><rect x="399" y="0" width="4" height="316" fill="#262240"/></g></g></svg>
<svg id="ph3" style="left:1514px;top:1562px" width="474" height="316" viewBox="0 0 474 316"><defs><clipPath id="cph3"><rect width="474" height="316" rx="26"/></clipPath>
<linearGradient id="p3roof" x1="0" y1="0" x2="1" y2="0"><stop offset="0" stop-color="#7e5c36"/><stop offset=".5" stop-color="#96784a"/><stop offset=".75" stop-color="#b09464"/><stop offset="1" stop-color="#9a7e52"/></linearGradient>
<linearGradient id="p3v1" x1="0" y1="0" x2="0" y2="1"><stop offset="0" stop-color="#7a4f2a"/><stop offset="1" stop-color="#663f20"/></linearGradient>
<linearGradient id="p3sky" x1="0" y1="0" x2="0" y2="1"><stop offset="0" stop-color="#fbfcfa"/><stop offset=".6" stop-color="#f1f3ee"/><stop offset="1" stop-color="#d9dccc"/></linearGradient>
<filter id="p3b"><feGaussianBlur stdDeviation="3.2"/></filter>
<filter id="p3b1"><feGaussianBlur stdDeviation="1.2"/></filter>
<filter id="p3d" x="-5%" y="-5%" width="110%" height="110%"><feTurbulence type="fractalNoise" baseFrequency=".06" numOctaves="3" seed="9"/><feDisplacementMap in="SourceGraphic" scale="16" xChannelSelector="R" yChannelSelector="G"/><feGaussianBlur stdDeviation="2.4"/></filter>
<filter id="p3n" x="0" y="0" width="100%" height="100%"><feTurbulence type="fractalNoise" baseFrequency=".12" numOctaves="3" seed="5"/><feColorMatrix values="0 0 0 0 .2  0 0 0 0 .3  0 0 0 0 .1  1.8 0 0 0 -.75"/><feGaussianBlur stdDeviation="1"/></filter>
</defs><g clip-path="url(#cph3)"><rect width="474" height="316" fill="url(#p3sky)"/><g filter="url(#p3b1)"><rect x="60" y="160" width="370" height="50" fill="#d6ccb2"/><rect x="250" y="166" width="180" height="26" fill="#c2b498"/><rect x="0" y="196" width="474" height="40" fill="#a9ad8c"/><rect x="0" y="212" width="474" height="110" fill="#8c9580"/></g><g filter="url(#p3d)" opacity=".86"><ellipse cx="28" cy="165" rx="44" ry="75" fill="#b2ba58"/><ellipse cx="18" cy="120" rx="22" ry="34" fill="#8fa04c"/><ellipse cx="110" cy="150" rx="34" ry="34" fill="#8c9c4a"/><ellipse cx="140" cy="125" rx="16" ry="18" fill="#9aa858"/><ellipse cx="205" cy="160" rx="42" ry="24" fill="#5e7a3c"/><ellipse cx="170" cy="140" rx="22" ry="22" fill="#6f8a44"/><ellipse cx="285" cy="158" rx="28" ry="22" fill="#587238"/><ellipse cx="400" cy="160" rx="20" ry="26" fill="#64703e"/><ellipse cx="60" cy="215" rx="50" ry="22" fill="#7e8c4c"/><path d="M176 180l4 26M245 176l-3 36M300 174l-6 30M72 196l-8 34" stroke="#4a4630" stroke-width="4" fill="none"/></g><rect x="0" y="150" width="430" height="90" filter="url(#p3n)" opacity=".3"/><path d="M124 228l64-12" stroke="#2c342e" stroke-width="5" filter="url(#p3b1)"/><g filter="url(#p3b1)"><path d="M400 108 L474 88 L474 316 L440 316 L425 150 Z" fill="#d9d5c4"/><path d="M412 116 Q436 124 440 170 L448 316" fill="none" stroke="#b9b6a8" stroke-width="7"/><path d="M474 104 Q446 110 446 140 L456 316" fill="none" stroke="#2a2a26" stroke-width="3.5"/><path d="M474 118 Q460 124 460 146 L468 316 L474 316Z" fill="#9fa39a"/></g><path d="M0 0H474V96L408 118 L330 98 L22 60 L0 70Z" fill="url(#p3roof)"/><path d="M250 0 H474 V92 L330 60 Z" fill="#ad9262" filter="url(#p3b)" opacity=".8"/><path d="M395 6 L338 56" stroke="#c4a878" stroke-width="2" opacity=".7"/><g filter="url(#p3b1)"><path d="M228 46 L322 62 L318 82 L262 90 L216 80 Z" fill="#8b846c"/><path d="M226 50 L248 48 L240 80 L216 80Z" fill="#4c4438"/><path d="M255 58 L312 68 L300 80 L262 84Z" fill="#a39c84"/></g><g filter="url(#p3b1)"><path d="M34 8 L242 14 Q252 22 250 36 L216 84 L30 58 Q26 30 34 8Z" fill="url(#p3v1)"/><path d="M332 62 L440 80 Q448 90 440 104 L428 120 L318 96 Q320 74 332 62Z" fill="#6f4524"/><path d="M30 56 L216 84" stroke="#5a3a1e" stroke-width="3"/></g><path d="M22 60 L330 98 L408 118" fill="none" stroke="#6a4a2a" stroke-width="4" filter="url(#p3b1)" opacity=".8"/><g transform="rotate(5 264 119)"><rect x="213" y="104" width="102" height="30" rx="10" fill="#1c1a18"/><rect x="217" y="107" width="94" height="24" rx="8" fill="#5c4638"/><ellipse cx="256" cy="118" rx="9" ry="8" fill="#a67860" filter="url(#p3b1)"/><rect x="280" y="108" width="14" height="22" fill="#4a3c34" filter="url(#p3b1)"/></g><g filter="url(#p3b1)"><path d="M0 0 H30 L8 150 L0 170Z" fill="#1e1f1a"/><path d="M0 30 L14 10 L4 120 L0 130Z" fill="#7d8c98"/></g></g></svg>
<div class="a" id="topbar" style="left:0;top:0;width:3452px;height:98px;background:#262d35"></div>
<div class="a" style="left:0;top:0;width:3452px;height:18px;background:linear-gradient(180deg,#a8adc0 0,#b4b9cc 1.6px,#b4b9cc 2px,#1b2133 2.6px,#1b2133 4px,#2f3546 4.4px,#2f3546 5px,#161b2d 5.5px,#161b2d 6.2px,#2a3042 6.8px,#262b3c 8px,#262b3c 15px,#262d35 18px)"></div>
<svg style="left:0;top:0" width="3452" height="98">
<path d="M45.57 35.40 L50.43 35.40 L50.90 39.80 L53.16 40.74 L56.60 37.96 L60.04 41.40 L57.26 44.84 L58.20 47.10 L62.60 47.57 L62.60 52.43 L58.20 52.90 L57.26 55.16 L60.04 58.60 L56.60 62.04 L53.16 59.26 L50.90 60.20 L50.43 64.60 L45.57 64.60 L45.10 60.20 L42.84 59.26 L39.40 62.04 L35.96 58.60 L38.74 55.16 L37.80 52.90 L33.40 52.43 L33.40 47.57 L37.80 47.10 L38.74 44.84 L35.96 41.40 L39.40 37.96 L42.84 40.74 L45.10 39.80Z M42.80 50.00 a5.20 5.20 0 1 0 10.40 0 a5.20 5.20 0 1 0 -10.40 0Z" fill="#ffffff" fill-rule="evenodd"/>
<circle cx="1384" cy="38.5" r="3.3" fill="#5a628c"/>
<circle cx="1384" cy="49.5" r="3.3" fill="#5a628c"/>
<circle cx="1384" cy="60.5" r="3.3" fill="#5a628c"/>
<path d="M1425 36 h32 v24 h-32z" fill="none" stroke="#fff" stroke-width="4.5"/><rect x="1420" y="60" width="41" height="5.5" rx="2" fill="#fff"/>
<rect x="1486" y="36.5" width="20" height="27" rx="2" fill="none" stroke="#535b83" stroke-width="3"/><rect x="1493" y="56.5" width="6" height="2.4" fill="#535b83"/>
<rect x="1544.5" y="38" width="15" height="25.5" rx="2" fill="none" stroke="#535b83" stroke-width="3"/><rect x="1544.5" y="36.5" width="15" height="3" fill="#535b83"/><circle cx="1552" cy="57.5" r="1.7" fill="#6a8a6a"/>
<g stroke="#aeb3c6" stroke-width="2.6" fill="none"><path d="M1627.5 32.5v30M1652 32.5v30"/></g><path d="M1631 47.5l6-6v4h5.5v-4l6 6-6 6v-4H1637v4z" fill="#aeb3c6"/>
<circle cx="1910.5" cy="46.5" r="9.3" fill="none" stroke="#b9bdcb" stroke-width="4.4"/><path d="M1903.5 54.5l-5.5 5.5" stroke="#b9bdcb" stroke-width="4.6" stroke-linecap="round"/>
<rect x="2506" y="26.5" width="85" height="46" rx="23" fill="#343e4c"/>
<polygon points="2530.50,37.60 2533.79,42.25 2539.41,41.29 2538.45,46.91 2543.10,50.20 2538.45,53.49 2539.41,59.11 2533.79,58.15 2530.50,62.80 2527.21,58.15 2521.59,59.11 2522.55,53.49 2517.90,50.20 2522.55,46.91 2521.59,41.29 2527.21,42.25" fill="#efe365" stroke="#efe365" stroke-width="1.2" stroke-linejoin="round"/>
<circle cx="2530.5" cy="50.2" r="4.6" fill="#e9d34c" stroke="#b8901c" stroke-width="1.8"/>
<circle cx="2568" cy="50" r="18" fill="#fff"/>
<path d="M2625 49.500 C2630.500 57.500 2642 57.500 2646.200 44.800" fill="none" stroke="#fff" stroke-width="4.400" stroke-linecap="round"/><path d="M2619.800 42.300l12 2.200-11.500 11.700z" fill="#fff"/>
<path d="M2685 56.5 C2688 42 2702 42 2706 50" fill="none" stroke="#6e7480" stroke-width="4.8"/><path d="M2712 44v13h-13z" fill="#6e7480"/>
<circle cx="2762" cy="50" r="12" fill="none" stroke="#fff" stroke-width="4.4"/><path d="M2762 42.5v8h7.5" fill="none" stroke="#fff" stroke-width="4.2"/>
<path d="M2817.5 36v22" stroke="#fff" stroke-width="4.4"/><path d="M2811 54.5h13l-6.5 9.5z" fill="#fff"/><path d="M2833.5 64v-22" stroke="#fff" stroke-width="4.4"/><path d="M2827 45.5h13l-6.5-9.5z" fill="#fff"/>
<rect x="2886.5" y="36" width="7" height="5" fill="#fff"/><rect x="2877" y="40.5" width="26" height="5" rx="1" fill="#fff"/><path d="M2880 48.5h20v15.5h-20z M2884.500 52.5v7.500h3.6v-7.500z M2891.900 52.5v7.500h3.600v-7.500z" fill="#fff" fill-rule="evenodd"/>
<path d="M2945.5 40.500 A12 12 0 1 0 2962.500 40.500" fill="none" stroke="#fff" stroke-width="4.400" stroke-linecap="butt"/><path d="M2954 36v15" stroke="#fff" stroke-width="4.4"/><path d="M2947 48h14l-7 8.500z" fill="#fff"/>
<path d="M3104.5 46h13l-6.5 8z" fill="#5c6484"/>
</svg>
<div class="box" style="left:1610px;top:23px;width:190px;height:55px"></div>
<div class="box" style="left:1880px;top:23px;width:190px;height:55px"></div>
<div class="box" style="left:2998px;top:20px;width:134px;height:59px"></div>
<div class="a" style="left:3091px;top:20px;width:2px;height:59px;background:#363d52"></div>
<div class="box" style="left:3155px;top:20px;width:145px;height:59px"></div>
<div class="a" style="left:3322px;top:20px;width:110px;height:60px;border-radius:8px;background:#36414f"></div>
<div class="t m" style="left:98.89px;top:36.52px;font-size:25.73px;letter-spacing:0.050px;color:#ffffff;">Blog Loops for Divi 5</div>
<div class="t " style="left:1670.97px;top:38.69px;font-size:23.98px;letter-spacing:0.721px;color:#5c6584;">1388px</div>
<div class="t " style="left:1941.67px;top:38.69px;font-size:23.98px;letter-spacing:1.481px;color:#5c6584;">100%</div>
<div class="t m2" style="left:3022.03px;top:38.79px;font-size:23.98px;letter-spacing:1.221px;color:#ffffff;">Exit</div>
<div class="t m2" style="left:3179.03px;top:38.79px;font-size:23.98px;letter-spacing:1.319px;color:#ffffff;">Preview</div>
<div class="t m2" style="left:3348.91px;top:38.79px;font-size:23.98px;letter-spacing:1.164px;color:#ffffff;">Save</div>
<div class="a" id="sidebar" style="left:0;top:98px;width:95px;height:1694px;background:linear-gradient(90deg,#fff 0,#fff 88px,#f3f3f3 92px,#d9d9d9 93px,#d9d9d9 95px)"></div>
<div class="a" style="left:20px;top:118px;width:56px;height:56px;border-radius:7px;background:#4068f0"></div>
<svg style="left:0;top:98px" width="95" height="1694" viewBox="0 98 95 1694">
<path d="M48 136.800v18.800M38.600 146.200h18.800" stroke="#fff" stroke-width="3.800" stroke-linecap="round"/>
<g fill="none" stroke="#a3a7b3" stroke-width="3.600" stroke-linejoin="round"><path d="M48 206l14 9-14 9-14-9z"/><path d="M34 224.500l14 9 14-9"/></g>
<g fill="none" stroke="#a3a7b3" stroke-width="3.400"><rect x="35.500" y="274" width="25" height="28" rx="9" ry="6.500"/><path d="M36 282.500q12 6.500 24 0M36 291q12 6.500 24 0"/></g>
<rect x="33.500" y="342" width="29" height="5.600" rx="2.500" fill="#b3abd9"/><rect x="33.500" y="351.500" width="14" height="5.400" fill="#a9acba"/><rect x="52" y="351.500" width="10.500" height="5.400" fill="#a9acba"/><rect x="33.500" y="361.500" width="6" height="5.400" fill="#a9acba"/><rect x="44" y="361.500" width="18.500" height="5.400" fill="#a9acba"/>
<rect x="18" y="402" width="57" height="2" fill="#dcdcdc"/><rect x="18" y="632" width="57" height="2" fill="#dcdcdc"/>
<g fill="#3f5fe2"><circle cx="37" cy="437" r="2.600"/><circle cx="45" cy="437" r="2.600"/><circle cx="53.300" cy="437" r="2.600"/></g>
<path d="M36 464.500v-20.500h24v14" fill="none" stroke="#3f5fe2" stroke-width="4"/><path d="M34 462.500h10" stroke="#3f5fe2" stroke-width="4"/>
<path d="M47.500 453.500l13 9-5 1.500 3.500 7-3.500 1.800-3.500-7-4 3.500z" fill="#3f5fe2"/>
<g fill="#3f5fe2"><circle cx="35.500" cy="501" r="2.600"/><circle cx="43.500" cy="501" r="2.600"/><circle cx="51.500" cy="501" r="2.600"/></g>
<path d="M34 530.500v-18q0-4 4-4h20q4 0 4 4v14" fill="none" stroke="#3f5fe2" stroke-width="4"/><path d="M32 530h11" stroke="#3f5fe2" stroke-width="4"/>
<path d="M41.500 524v-8.500h14.500v6" fill="none" stroke="#3f5fe2" stroke-width="3.400"/>
<path d="M48 520l13 9-5 1.500 3.500 7-3.500 1.800-3.500-7-4 3.500z" fill="#3f5fe2"/>
<g fill="none" stroke="#a3a3ae" stroke-width="3.800"><path d="M60.500 590v-14q0-4-4-4h-16.500q-4 0-4 4v17q0 4 4 4h10"/><path d="M36 580.500h24.500M45.500 580.500v16"/></g>
<ellipse cx="62" cy="597.500" rx="10.500" ry="8.500" fill="#fff" stroke="#a3a3ae" stroke-width="3.400"/><circle cx="62" cy="597.500" r="2.800" fill="#a3a3ae"/>
<g stroke="#9da1ad" fill="none"><path d="M42.5 676 L54 687.500" stroke-width="4.400"/><path d="M39.90 667.94 A4.90 4.90 0 1 1 34.44 673.40" stroke-width="3.800"/><path d="M56.60 695.36 A4.90 4.90 0 1 1 62.06 689.90" stroke-width="3.800"/><path d="M60.500 669.500 L53 677" stroke-width="7"/><path d="M53.500 676.500 L38.500 691.500" stroke-width="3"/><path d="M40.500 689.500 L35.500 694.500" stroke-width="4.600" stroke-linecap="round"/></g>
</svg>
<div class="t m" style="left:39.31px;top:732.89px;font-size:29.07px;letter-spacing:0.000px;color:#a4a4b4;">?</div>
<div class="a" id="panel" style="left:2896px;top:98px;width:556px;height:1694px;background:#fff;border-left:2px solid #c9c9c9"></div>
<div class="a" style="left:2880px;top:106px;width:8px;height:707px;border-radius:4px;background:#272b2b"></div>
<div class="t " style="left:2929.19px;top:127.59px;font-size:22.09px;letter-spacing:1.066px;color:#5b6180;">Page</div>
<div class="t " style="left:3013.00px;top:127.59px;font-size:22.09px;letter-spacing:1.058px;color:#5b6180;">Section</div>
<div class="t m2" style="left:2929.12px;top:196.66px;font-size:22.97px;letter-spacing:1.693px;color:#111111;">Row</div>
<div class="a" style="left:3222px;top:183px;width:202px;height:46px;border:2px solid #dcdcdc;border-radius:7px;background:#fff;box-shadow:0 2px 2px rgba(0,0,0,.10)"></div>
<div class="t m" style="left:3234.19px;top:195.29px;font-size:22.09px;letter-spacing:0.876px;color:#1d1d1d;">Default Preset</div>
<div class="t m" style="left:2931.45px;top:263.98px;font-size:24.71px;letter-spacing:0.982px;color:#4263c8;">Content</div>
<div class="t m" style="left:3063.57px;top:263.98px;font-size:24.71px;letter-spacing:1.143px;color:#5b6180;">Design</div>
<div class="t m" style="left:3185.95px;top:263.98px;font-size:24.71px;letter-spacing:1.106px;color:#5b6180;">Advanced</div>
<div class="hl" style="top:318px"></div>
<div class="a" style="left:2912px;top:314px;width:133px;height:6px;background:#3d5fe0"></div>
<div class="a" style="left:2930px;top:353px;width:494px;height:55px;border:2px solid #dadada;border-radius:5px;background:#fff"></div>
<div class="t " style="left:2982.68px;top:367.58px;font-size:24.71px;letter-spacing:0.587px;color:#a9a9a9;">Search settings...</div>
<div class="hl" style="top:439px"></div>
<div class="col" style="top:474.0px"></div>
<div class="t m" style="left:3153.25px;top:489.38px;font-size:24.71px;letter-spacing:0.903px;color:#1a1a1a;">Column</div>
<div class="col" style="top:546.5px"></div>
<div class="t m" style="left:3153.25px;top:561.88px;font-size:24.71px;letter-spacing:0.903px;color:#1a1a1a;">Column</div>
<div class="col" style="top:619.0px"></div>
<div class="t m" style="left:3153.25px;top:634.38px;font-size:24.71px;letter-spacing:0.903px;color:#1a1a1a;">Column</div>
<div class="t m" style="left:2975.55px;top:725.08px;font-size:24.71px;letter-spacing:0.499px;color:#5d6280;">Add New Column</div>
<div class="a" style="left:2930px;top:816px;width:494px;height:56px;border-radius:6px;background:#f4f4f4"></div>
<div class="t m2" style="left:3025.75px;top:831.38px;font-size:24.71px;letter-spacing:0.731px;color:#1d1d1d;">Change Column Structure</div>
<div class="hl" style="top:904px"></div>
<div class="t m2" style="left:2960.73px;top:937.49px;font-size:25.29px;letter-spacing:0.614px;color:#222222;">Link</div>
<div class="hl" style="top:996px"></div>
<div class="t m2" style="left:2960.73px;top:1029.49px;font-size:25.29px;letter-spacing:0.703px;color:#222222;">Background</div>
<div class="hl" style="top:1088px"></div>
<div class="t m2" style="left:2960.73px;top:1121.49px;font-size:25.29px;letter-spacing:0.892px;color:#222222;">Loop</div>
<div class="hl" style="top:1180px"></div>
<div class="t m2" style="left:2961.60px;top:1213.49px;font-size:25.29px;letter-spacing:0.293px;color:#222222;">Order</div>
<div class="hl" style="top:1272px"></div>
<div class="t m2" style="left:2962.75px;top:1305.49px;font-size:25.29px;letter-spacing:0.295px;color:#222222;">Admin Label</div>
<div class="hl" style="top:1364px"></div>
<div class="a" style="left:2934px;top:1399.5px;width:32px;height:32px;border-radius:16px;background:#a0a6bd"></div>
<div class="t " style="left:2943.20px;top:1403.69px;font-size:23.98px;letter-spacing:0.000px;color:#ffffff;font-weight:700;">?</div>
<svg style="left:2896px;top:98px" width="556" height="1694" viewBox="2896 98 556 1694">
<path d="M2996 133l6.500 6-6.500 6" fill="none" stroke="#b4b7c6" stroke-width="2.600"/>
<path d="M3404 131.500l19 18M3423 131.500l-19 18" stroke="#222" stroke-width="4.200"/>
<g fill="#222"><circle cx="3396" cy="201.500" r="2.400"/><rect x="3401" y="199.500" width="9.500" height="3.800" rx="1.900"/><rect x="3393.500" y="209.500" width="9.500" height="3.800" rx="1.900"/><circle cx="3408" cy="211.500" r="2.400"/></g>
<path d="M3349.500 272h15.500l-7.700 9.500z" fill="#1f1f1f"/>
<rect x="3383.500" y="262" width="29" height="24.500" fill="none" stroke="#2a2a2a" stroke-width="3.800"/><rect x="3379" y="287" width="38.500" height="4.400" rx="1.500" fill="#2a2a2a"/>
<circle cx="2962.500" cy="379.500" r="7.800" fill="none" stroke="#a2a2a2" stroke-width="3.600"/><path d="M2956.500 386.500l-5.500 5" stroke="#a2a2a2" stroke-width="4" stroke-linecap="round"/>
<path d="M3382 370.500h20l-7.500 9.500v9.500l-5 -2.500v-7z" fill="#222" stroke="#222" stroke-width="1.500" stroke-linejoin="round"/>
<path d="M2957.77 488.08 L2962.23 488.08 L2962.63 492.27 L2964.67 493.11 L2967.91 490.43 L2971.07 493.59 L2968.39 496.83 L2969.23 498.87 L2973.42 499.27 L2973.42 503.73 L2969.23 504.13 L2968.39 506.17 L2971.07 509.41 L2967.91 512.57 L2964.67 509.89 L2962.63 510.73 L2962.23 514.92 L2957.77 514.92 L2957.37 510.73 L2955.33 509.89 L2952.09 512.57 L2948.93 509.41 L2951.61 506.17 L2950.77 504.13 L2946.58 503.73 L2946.58 499.27 L2950.77 498.87 L2951.61 496.83 L2948.93 493.59 L2952.09 490.43 L2955.33 493.11 L2957.37 492.27Z M2953.60 501.50 a6.40 6.40 0 1 0 12.80 0 a6.40 6.40 0 1 0 -12.80 0Z" fill="#8a93bf" fill-rule="evenodd"/>
<rect x="2991.700" y="490.7" width="16.800" height="12.500" rx="1.200" fill="none" stroke="#9194ae" stroke-width="3"/><rect x="2990.200" y="489.2" width="19.800" height="3.600" fill="#9194ae"/><path d="M2999 511.3h17.300v-15.500" fill="none" stroke="#9194ae" stroke-width="3"/>
<g fill="#9196b1"><rect x="3364.500" y="487.9" width="6.500" height="4.500"/><rect x="3356.500" y="491.7" width="23" height="4.400" rx="1"/><path d="M3359 498.9h18v16.500h-18z M3362.800 502.9v9h3.400v-9z M3369.800 502.9v9h3.400v-9z" fill-rule="evenodd"/></g>
<circle cx="3401" cy="491.5" r="2.600" fill="#a0a4b9"/>
<circle cx="3401" cy="501.5" r="2.600" fill="#a0a4b9"/>
<circle cx="3401" cy="511.5" r="2.600" fill="#a0a4b9"/>
<path d="M2957.77 560.58 L2962.23 560.58 L2962.63 564.77 L2964.67 565.61 L2967.91 562.93 L2971.07 566.09 L2968.39 569.33 L2969.23 571.37 L2973.42 571.77 L2973.42 576.23 L2969.23 576.63 L2968.39 578.67 L2971.07 581.91 L2967.91 585.07 L2964.67 582.39 L2962.63 583.23 L2962.23 587.42 L2957.77 587.42 L2957.37 583.23 L2955.33 582.39 L2952.09 585.07 L2948.93 581.91 L2951.61 578.67 L2950.77 576.63 L2946.58 576.23 L2946.58 571.77 L2950.77 571.37 L2951.61 569.33 L2948.93 566.09 L2952.09 562.93 L2955.33 565.61 L2957.37 564.77Z M2953.60 574.00 a6.40 6.40 0 1 0 12.80 0 a6.40 6.40 0 1 0 -12.80 0Z" fill="#8a93bf" fill-rule="evenodd"/>
<rect x="2991.700" y="563.2" width="16.800" height="12.500" rx="1.200" fill="none" stroke="#9194ae" stroke-width="3"/><rect x="2990.200" y="561.7" width="19.800" height="3.600" fill="#9194ae"/><path d="M2999 583.8h17.300v-15.500" fill="none" stroke="#9194ae" stroke-width="3"/>
<g fill="#9196b1"><rect x="3364.500" y="560.4" width="6.500" height="4.500"/><rect x="3356.500" y="564.2" width="23" height="4.400" rx="1"/><path d="M3359 571.4h18v16.500h-18z M3362.800 575.4v9h3.400v-9z M3369.800 575.4v9h3.400v-9z" fill-rule="evenodd"/></g>
<circle cx="3401" cy="564.0" r="2.600" fill="#a0a4b9"/>
<circle cx="3401" cy="574.0" r="2.600" fill="#a0a4b9"/>
<circle cx="3401" cy="584.0" r="2.600" fill="#a0a4b9"/>
<path d="M2957.77 633.08 L2962.23 633.08 L2962.63 637.27 L2964.67 638.11 L2967.91 635.43 L2971.07 638.59 L2968.39 641.83 L2969.23 643.87 L2973.42 644.27 L2973.42 648.73 L2969.23 649.13 L2968.39 651.17 L2971.07 654.41 L2967.91 657.57 L2964.67 654.89 L2962.63 655.73 L2962.23 659.92 L2957.77 659.92 L2957.37 655.73 L2955.33 654.89 L2952.09 657.57 L2948.93 654.41 L2951.61 651.17 L2950.77 649.13 L2946.58 648.73 L2946.58 644.27 L2950.77 643.87 L2951.61 641.83 L2948.93 638.59 L2952.09 635.43 L2955.33 638.11 L2957.37 637.27Z M2953.60 646.50 a6.40 6.40 0 1 0 12.80 0 a6.40 6.40 0 1 0 -12.80 0Z" fill="#8a93bf" fill-rule="evenodd"/>
<rect x="2991.700" y="635.7" width="16.800" height="12.500" rx="1.200" fill="none" stroke="#9194ae" stroke-width="3"/><rect x="2990.200" y="634.2" width="19.800" height="3.600" fill="#9194ae"/><path d="M2999 656.3h17.300v-15.500" fill="none" stroke="#9194ae" stroke-width="3"/>
<g fill="#9196b1"><rect x="3364.500" y="632.9" width="6.500" height="4.500"/><rect x="3356.500" y="636.7" width="23" height="4.400" rx="1"/><path d="M3359 643.9h18v16.500h-18z M3362.800 647.9v9h3.400v-9z M3369.800 647.9v9h3.400v-9z" fill-rule="evenodd"/></g>
<circle cx="3401" cy="636.5" r="2.600" fill="#a0a4b9"/>
<circle cx="3401" cy="646.5" r="2.600" fill="#a0a4b9"/>
<circle cx="3401" cy="656.5" r="2.600" fill="#a0a4b9"/>
<path d="M2946 729v19.500M2936.200 738.800h19.600" stroke="#7c8199" stroke-width="2.800"/>
<path d="M2930 942.2v14.500l10-7.250z" fill="#222"/>
<path d="M2930 1034.2v14.500l10-7.250z" fill="#222"/>
<path d="M2930 1126.2v14.500l10-7.250z" fill="#222"/>
<path d="M2930 1218.2v14.500l10-7.250z" fill="#222"/>
<path d="M2930 1310.2v14.500l10-7.250z" fill="#222"/>
</svg>
<div class="a" style="left:2902px;top:1783.5px;width:548px;height:12px;border-radius:6px;background:#3f5fe0"></div>
<div class="a" style="left:0;top:1712px;width:3452px;height:80px;background:linear-gradient(180deg,rgba(0,0,0,0) 0%,rgba(0,0,0,.035) 45%,rgba(0,0,0,.11) 100%);-webkit-mask-image:linear-gradient(90deg,rgba(0,0,0,0) 0,#000 260px,#000 2900px,rgba(0,0,0,0) 3230px);mask-image:linear-gradient(90deg,rgba(0,0,0,0) 0,#000 260px,#000 2900px,rgba(0,0,0,0) 3230px)"></div>
<svg style="left:0;top:1775px" width="12" height="17"><path d="M0 0v17h7.500Q0.500 10 0 0z" fill="#2a2e2e"/></svg>
<svg style="left:3040px;top:40px" width="320" height="200" viewBox="3040 40 320 200"><g fill="none" stroke="#e25a4f" stroke-linecap="round" stroke-linejoin="round"><path d="M3070 213L3326 81.500" stroke-width="13.200"/><path d="M3289 67.500L3332 75.500L3316.500 117" stroke-width="13" stroke-linejoin="miter"/></g></svg>
</body></html>
